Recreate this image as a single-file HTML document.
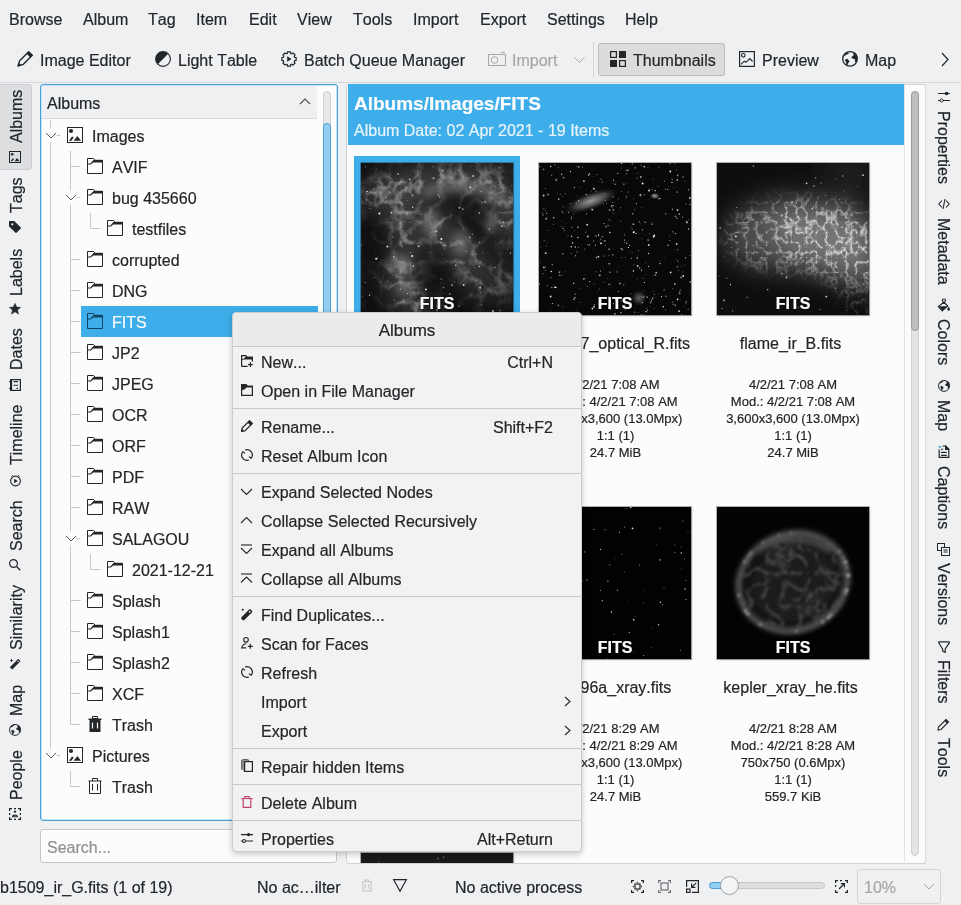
<!DOCTYPE html>
<html><head><meta charset="utf-8">
<style>
*{margin:0;padding:0;box-sizing:border-box}
html,body{width:961px;height:905px;overflow:hidden;background:#eff0f1;font-family:"Liberation Sans",sans-serif;color:#232629;font-size:16px;font-kerning:none;font-feature-settings:"kern" 0}
.a{position:absolute}
#root{position:absolute;left:0;top:0;width:961px;height:905px;will-change:transform}
.t{position:absolute;white-space:pre;line-height:18px;font-size:16px;-webkit-text-stroke:0.2px currentColor}
svg{position:absolute;overflow:visible}
</style></head><body><div id="root">
<div class="t" style="left:9px;top:11px;">Browse</div>
<div class="t" style="left:83px;top:11px;">Album</div>
<div class="t" style="left:148px;top:11px;">Tag</div>
<div class="t" style="left:196px;top:11px;">Item</div>
<div class="t" style="left:249px;top:11px;">Edit</div>
<div class="t" style="left:297px;top:11px;">View</div>
<div class="t" style="left:353px;top:11px;">Tools</div>
<div class="t" style="left:413px;top:11px;">Import</div>
<div class="t" style="left:480px;top:11px;">Export</div>
<div class="t" style="left:547px;top:11px;">Settings</div>
<div class="t" style="left:625px;top:11px;">Help</div>
<svg style="left:17px;top:51px;" width="16" height="16" viewBox="0 0 16 16"><path d="M1 15L2.66 9.66L11.66 0.66L15.34 4.34L6.34 13.34Z" fill="none" stroke="#232629" stroke-width="1.4" stroke-linejoin="round"/><path d="M11.66 0.66L15.34 4.34L13.3 6.4L9.6 2.7Z" fill="#232629"/><path d="M1 15L1.8 12.2C2.8 12.4 3.6 13.2 3.8 14.2Z" fill="#232629"/></svg>
<div class="t" style="left:40px;top:52px;">Image Editor</div>
<svg style="left:155px;top:51px;" width="16" height="16" viewBox="0 0 16 16"><circle cx="8" cy="8" r="7.4" fill="none" stroke="#232629" stroke-width="1.1"/><path d="M13.2 2.8A7.3 7.3 0 0 0 2.8 13.2Z" fill="#232629"/></svg>
<div class="t" style="left:178px;top:52px;">Light Table</div>
<svg style="left:281px;top:51px;" width="16" height="16" viewBox="0 0 16 16"><path d="M13.65 6.29 L15.14 6.50 L15.14 9.50 L13.65 9.71 L13.20 10.79 L14.11 11.99 L11.99 14.11 L10.79 13.20 L9.71 13.65 L9.50 15.14 L6.50 15.14 L6.29 13.65 L5.21 13.20 L4.01 14.11 L1.89 11.99 L2.80 10.79 L2.35 9.71 L0.86 9.50 L0.86 6.50 L2.35 6.29 L2.80 5.21 L1.89 4.01 L4.01 1.89 L5.21 2.80 L6.29 2.35 L6.50 0.86 L9.50 0.86 L9.71 2.35 L10.79 2.80 L11.99 1.89 L14.11 4.01 L13.20 5.21Z" fill="none" stroke="#232629" stroke-width="1.2" stroke-linejoin="round"/><path d="M6.2 5.3L10.6 8L6.2 10.7Z" fill="#232629"/></svg>
<div class="t" style="left:304px;top:52px;">Batch Queue Manager</div>
<svg style="left:488px;top:52px;" width="18" height="14" viewBox="0 0 18 14"><rect x="0.5" y="2.5" width="17" height="11" fill="none" stroke="#a5a7a9"/><circle cx="6.5" cy="8" r="3.3" fill="none" stroke="#a5a7a9"/><path d="M13 0.5H17" stroke="#a5a7a9"/></svg>
<div class="t" style="left:512px;top:52px;color:#a5a7a9">Import</div>
<svg style="left:574px;top:57px;" width="11" height="6" viewBox="0 0 11 6"><path d="M0.5 0.5L5.5 5.5L10.5 0.5" fill="none" stroke="#a5a7a9" stroke-width="1"/></svg>
<div class="a" style="left:593px;top:42px;width:1px;height:35px;background:#d2d4d6"></div>
<div class="a" style="left:598px;top:43px;width:127px;height:33px;background:#dcdcdd;border:1px solid #b9babb;border-radius:3px"></div>
<svg style="left:610px;top:51px;" width="16" height="16" viewBox="0 0 16 16"><rect x="0.6" y="0.6" width="5.8" height="5.8" fill="none" stroke="#232629" stroke-width="1.2"/><rect x="9" y="0" width="7" height="7" fill="#232629"/><rect x="0" y="9" width="7" height="7" fill="#232629"/><rect x="9.6" y="9.6" width="5.8" height="5.8" fill="none" stroke="#232629" stroke-width="1.2"/></svg>
<div class="t" style="left:633px;top:52px;">Thumbnails</div>
<svg style="left:739px;top:51px;" width="16" height="16" viewBox="0 0 16 16"><rect x="0.6" y="0.6" width="14.8" height="14.8" fill="none" stroke="#232629" stroke-width="1.2"/><circle cx="4.3" cy="4.3" r="1.8" fill="none" stroke="#232629" stroke-width="1.1"/><path d="M2 13.3L5.3 10.2L7 11.3L10.8 7.5L13.6 10.5" fill="none" stroke="#232629" stroke-width="1.1"/></svg>
<div class="t" style="left:762px;top:52px;">Preview</div>
<svg style="left:842px;top:51px;" width="16" height="16" viewBox="0 0 16 16"><circle cx="8" cy="7.9" r="7.3" fill="none" stroke="#232629" stroke-width="1.3"/><path d="M1.2 4.5L3.4 1.9L6.5 1.4L6.9 2.4L4.5 3.7L1.9 4.9Z" fill="#232629"/><path d="M11.2 1.2L11.6 4.3L9.5 5.9L9.8 7.2L12.9 8.3L13.1 11.8L14.9 10.3L15.6 7.2L14.9 3.4L13.4 1.9Z" fill="#232629"/><path d="M3.2 8.5L5.2 7.8L7.6 10.3L6.3 12L5.4 14.2L4.3 13.4L4.1 10.7L3 9.9Z" fill="#232629"/></svg>
<div class="t" style="left:865px;top:52px;">Map</div>
<svg style="left:941px;top:52px;" width="8" height="15" viewBox="0 0 8 15"><path d="M1 1L7 7.5L1 14" fill="none" stroke="#232629" stroke-width="1.2"/></svg>
<div class="a" style="left:0px;top:82px;width:961px;height:1px;background:#d4d6d8"></div>
<div class="a" style="left:0px;top:84px;width:32px;height:86px;background:#dcdee0;border:1px solid #cbcdd0;border-left:none;border-radius:0 4px 4px 0"></div>
<div class="a" style="left:40px;top:84px;width:298px;height:737px;background:#fcfcfc;border:1px solid #4c9fd4;border-radius:3px;box-shadow:inset 0 0 0 1px #bfe6fb"></div>
<div class="a" style="left:42px;top:86px;width:275px;height:33px;background:#eff0f1;border-bottom:1px solid #d8dadc"></div>
<div class="t" style="left:47px;top:95px;">Albums</div>
<svg style="left:299px;top:98px;" width="12" height="7" viewBox="0 0 12 7"><path d="M1 6L6 1L11 6" fill="none" stroke="#4d4f52" stroke-width="1.2"/></svg>
<div class="a" style="left:323px;top:91px;width:8px;height:724px;background:#e6e7e8;border:1px solid #cfd1d3;border-radius:4px"></div>
<div class="a" style="left:323px;top:123px;width:8px;height:400px;background:#93cef2;border:1px solid #4a9fd3;border-radius:4px"></div>
<div class="a" style="left:81px;top:306px;width:237px;height:31px;background:#3daee9"></div>
<svg style="left:67px;top:127px;" width="16" height="16" viewBox="0 0 16 16"><rect x="0.5" y="0.5" width="15" height="15" fill="none" stroke="#232629"/><circle cx="4" cy="4" r="2.1" fill="#232629"/><path d="M2 13.7L5 9.5L6.8 10.6L4 13.9Z" fill="#232629"/><path d="M6.6 13.7L10.4 8.9L14 13.7Z" fill="#232629"/></svg>
<div class="t" style="left:92px;top:128px;">Images</div>
<svg style="left:87px;top:158px;" width="16" height="16" viewBox="0 0 16 16"><path d="M0.5 0.5H6.6L8.3 2.3H15.5V15.5H0.5Z" fill="none" stroke="#232629"/><path d="M6.6 2H16V4.6H6.2L3.9 6.6H0.5V5.6H3.4L6 2.6Z" fill="#232629"/></svg>
<div class="t" style="left:112px;top:159px;">AVIF</div>
<svg style="left:87px;top:189px;" width="16" height="16" viewBox="0 0 16 16"><path d="M0.5 0.5H6.6L8.3 2.3H15.5V15.5H0.5Z" fill="none" stroke="#232629"/><path d="M6.6 2H16V4.6H6.2L3.9 6.6H0.5V5.6H3.4L6 2.6Z" fill="#232629"/></svg>
<div class="t" style="left:112px;top:190px;">bug 435660</div>
<svg style="left:107px;top:220px;" width="16" height="16" viewBox="0 0 16 16"><path d="M0.5 0.5H6.6L8.3 2.3H15.5V15.5H0.5Z" fill="none" stroke="#232629"/><path d="M6.6 2H16V4.6H6.2L3.9 6.6H0.5V5.6H3.4L6 2.6Z" fill="#232629"/></svg>
<div class="t" style="left:132px;top:221px;">testfiles</div>
<svg style="left:87px;top:251px;" width="16" height="16" viewBox="0 0 16 16"><path d="M0.5 0.5H6.6L8.3 2.3H15.5V15.5H0.5Z" fill="none" stroke="#232629"/><path d="M6.6 2H16V4.6H6.2L3.9 6.6H0.5V5.6H3.4L6 2.6Z" fill="#232629"/></svg>
<div class="t" style="left:112px;top:252px;">corrupted</div>
<svg style="left:87px;top:282px;" width="16" height="16" viewBox="0 0 16 16"><path d="M0.5 0.5H6.6L8.3 2.3H15.5V15.5H0.5Z" fill="none" stroke="#232629"/><path d="M6.6 2H16V4.6H6.2L3.9 6.6H0.5V5.6H3.4L6 2.6Z" fill="#232629"/></svg>
<div class="t" style="left:112px;top:283px;">DNG</div>
<svg style="left:87px;top:313px;" width="16" height="16" viewBox="0 0 16 16"><path d="M0.5 0.5H6.6L8.3 2.3H15.5V15.5H0.5Z" fill="none" stroke="#134466"/><path d="M6.6 2H16V4.6H6.2L3.9 6.6H0.5V5.6H3.4L6 2.6Z" fill="#134466"/></svg>
<div class="t" style="left:112px;top:314px;color:#fcfcfc">FITS</div>
<svg style="left:87px;top:344px;" width="16" height="16" viewBox="0 0 16 16"><path d="M0.5 0.5H6.6L8.3 2.3H15.5V15.5H0.5Z" fill="none" stroke="#232629"/><path d="M6.6 2H16V4.6H6.2L3.9 6.6H0.5V5.6H3.4L6 2.6Z" fill="#232629"/></svg>
<div class="t" style="left:112px;top:345px;">JP2</div>
<svg style="left:87px;top:375px;" width="16" height="16" viewBox="0 0 16 16"><path d="M0.5 0.5H6.6L8.3 2.3H15.5V15.5H0.5Z" fill="none" stroke="#232629"/><path d="M6.6 2H16V4.6H6.2L3.9 6.6H0.5V5.6H3.4L6 2.6Z" fill="#232629"/></svg>
<div class="t" style="left:112px;top:376px;">JPEG</div>
<svg style="left:87px;top:406px;" width="16" height="16" viewBox="0 0 16 16"><path d="M0.5 0.5H6.6L8.3 2.3H15.5V15.5H0.5Z" fill="none" stroke="#232629"/><path d="M6.6 2H16V4.6H6.2L3.9 6.6H0.5V5.6H3.4L6 2.6Z" fill="#232629"/></svg>
<div class="t" style="left:112px;top:407px;">OCR</div>
<svg style="left:87px;top:437px;" width="16" height="16" viewBox="0 0 16 16"><path d="M0.5 0.5H6.6L8.3 2.3H15.5V15.5H0.5Z" fill="none" stroke="#232629"/><path d="M6.6 2H16V4.6H6.2L3.9 6.6H0.5V5.6H3.4L6 2.6Z" fill="#232629"/></svg>
<div class="t" style="left:112px;top:438px;">ORF</div>
<svg style="left:87px;top:468px;" width="16" height="16" viewBox="0 0 16 16"><path d="M0.5 0.5H6.6L8.3 2.3H15.5V15.5H0.5Z" fill="none" stroke="#232629"/><path d="M6.6 2H16V4.6H6.2L3.9 6.6H0.5V5.6H3.4L6 2.6Z" fill="#232629"/></svg>
<div class="t" style="left:112px;top:469px;">PDF</div>
<svg style="left:87px;top:499px;" width="16" height="16" viewBox="0 0 16 16"><path d="M0.5 0.5H6.6L8.3 2.3H15.5V15.5H0.5Z" fill="none" stroke="#232629"/><path d="M6.6 2H16V4.6H6.2L3.9 6.6H0.5V5.6H3.4L6 2.6Z" fill="#232629"/></svg>
<div class="t" style="left:112px;top:500px;">RAW</div>
<svg style="left:87px;top:530px;" width="16" height="16" viewBox="0 0 16 16"><path d="M0.5 0.5H6.6L8.3 2.3H15.5V15.5H0.5Z" fill="none" stroke="#232629"/><path d="M6.6 2H16V4.6H6.2L3.9 6.6H0.5V5.6H3.4L6 2.6Z" fill="#232629"/></svg>
<div class="t" style="left:112px;top:531px;">SALAGOU</div>
<svg style="left:107px;top:561px;" width="16" height="16" viewBox="0 0 16 16"><path d="M0.5 0.5H6.6L8.3 2.3H15.5V15.5H0.5Z" fill="none" stroke="#232629"/><path d="M6.6 2H16V4.6H6.2L3.9 6.6H0.5V5.6H3.4L6 2.6Z" fill="#232629"/></svg>
<div class="t" style="left:132px;top:562px;">2021-12-21</div>
<svg style="left:87px;top:592px;" width="16" height="16" viewBox="0 0 16 16"><path d="M0.5 0.5H6.6L8.3 2.3H15.5V15.5H0.5Z" fill="none" stroke="#232629"/><path d="M6.6 2H16V4.6H6.2L3.9 6.6H0.5V5.6H3.4L6 2.6Z" fill="#232629"/></svg>
<div class="t" style="left:112px;top:593px;">Splash</div>
<svg style="left:87px;top:623px;" width="16" height="16" viewBox="0 0 16 16"><path d="M0.5 0.5H6.6L8.3 2.3H15.5V15.5H0.5Z" fill="none" stroke="#232629"/><path d="M6.6 2H16V4.6H6.2L3.9 6.6H0.5V5.6H3.4L6 2.6Z" fill="#232629"/></svg>
<div class="t" style="left:112px;top:624px;">Splash1</div>
<svg style="left:87px;top:654px;" width="16" height="16" viewBox="0 0 16 16"><path d="M0.5 0.5H6.6L8.3 2.3H15.5V15.5H0.5Z" fill="none" stroke="#232629"/><path d="M6.6 2H16V4.6H6.2L3.9 6.6H0.5V5.6H3.4L6 2.6Z" fill="#232629"/></svg>
<div class="t" style="left:112px;top:655px;">Splash2</div>
<svg style="left:87px;top:685px;" width="16" height="16" viewBox="0 0 16 16"><path d="M0.5 0.5H6.6L8.3 2.3H15.5V15.5H0.5Z" fill="none" stroke="#232629"/><path d="M6.6 2H16V4.6H6.2L3.9 6.6H0.5V5.6H3.4L6 2.6Z" fill="#232629"/></svg>
<div class="t" style="left:112px;top:686px;">XCF</div>
<svg style="left:87px;top:716px;" width="16" height="16" viewBox="0 0 16 16"><path d="M1.5 2.5H14.5V4H1.5Z" fill="#232629"/><path d="M5.5 0.5H10.5V2.5H5.5Z" fill="none" stroke="#232629"/><path d="M2.5 4H13.5V16H2.5Z" fill="#232629"/><path d="M5.5 6.5V12.5M10.5 6.5V12.5" stroke="#fcfcfc" stroke-width="1.2"/></svg>
<div class="t" style="left:112px;top:717px;">Trash</div>
<svg style="left:67px;top:747px;" width="16" height="16" viewBox="0 0 16 16"><rect x="0.5" y="0.5" width="15" height="15" fill="none" stroke="#232629"/><circle cx="4" cy="4" r="2.1" fill="#232629"/><path d="M2 13.7L5 9.5L6.8 10.6L4 13.9Z" fill="#232629"/><path d="M6.6 13.7L10.4 8.9L14 13.7Z" fill="#232629"/></svg>
<div class="t" style="left:92px;top:748px;">Pictures</div>
<svg style="left:87px;top:778px;" width="16" height="16" viewBox="0 0 16 16"><path d="M1.5 3H14.5" stroke="#232629"/><path d="M5.5 3V0.5H10.5V3" fill="none" stroke="#232629"/><path d="M2.5 3V15.5H13.5V3" fill="none" stroke="#232629"/><path d="M5.5 6V12.5M10.5 6V12.5" stroke="#232629"/></svg>
<div class="t" style="left:112px;top:779px;">Trash</div>
<svg style="left:0;top:0" width="961" height="905"><path d="M50.5 120V128.5M50.5 142.5V151M56.5 135.5H60.5M50.5 151V182M70.5 151V166.5H80.5M70.5 166.5V182M50.5 182V213M70.5 182V190.5M70.5 204.5V213M76.5 197.5H80.5M50.5 213V244M70.5 213V244M90.5 213V228.5H100.5M50.5 244V275M70.5 244V259.5H80.5M70.5 259.5V275M50.5 275V306M70.5 275V290.5H80.5M70.5 290.5V306M50.5 306V337M70.5 306V321.5H80.5M70.5 321.5V337M50.5 337V368M70.5 337V352.5H80.5M70.5 352.5V368M50.5 368V399M70.5 368V383.5H80.5M70.5 383.5V399M50.5 399V430M70.5 399V414.5H80.5M70.5 414.5V430M50.5 430V461M70.5 430V445.5H80.5M70.5 445.5V461M50.5 461V492M70.5 461V476.5H80.5M70.5 476.5V492M50.5 492V523M70.5 492V507.5H80.5M70.5 507.5V523M50.5 523V554M70.5 523V531.5M70.5 545.5V554M76.5 538.5H80.5M50.5 554V585M70.5 554V585M90.5 554V569.5H100.5M50.5 585V616M70.5 585V600.5H80.5M70.5 600.5V616M50.5 616V647M70.5 616V631.5H80.5M70.5 631.5V647M50.5 647V678M70.5 647V662.5H80.5M70.5 662.5V678M50.5 678V709M70.5 678V693.5H80.5M70.5 693.5V709M50.5 709V740M70.5 709V724.5H80.5M50.5 740V748.5M56.5 755.5H60.5M70.5 771V786.5H80.5" stroke="#c6c8ca" stroke-width="1" fill="none"/><path d="M46.0 133.0L51.0 138.0L56.0 133.0" fill="none" stroke="#5a5c5f" stroke-width="1"/><path d="M66.0 195.0L71.0 200.0L76.0 195.0" fill="none" stroke="#5a5c5f" stroke-width="1"/><path d="M66.0 536.0L71.0 541.0L76.0 536.0" fill="none" stroke="#5a5c5f" stroke-width="1"/><path d="M46.0 753.0L51.0 758.0L56.0 753.0" fill="none" stroke="#5a5c5f" stroke-width="1"/></svg>
<div class="a" style="left:40px;top:829px;width:297px;height:34px;background:#fcfcfc;border:1px solid #c4c6c8;border-radius:3px"></div>
<div class="t" style="left:47px;top:839px;color:#8f9193">Search...</div>
<div class="a" style="left:346px;top:84px;width:580px;height:780px;background:#fcfcfc;border:1px solid #d0d2d4;border-radius:3px"></div>
<div class="a" style="left:348px;top:84px;width:556px;height:61px;background:#3daee9"></div>
<div class="t" style="left:354px;top:94px;font-size:19px;font-weight:bold;color:#fcfcfc;line-height:20px">Albums/Images/FITS</div>
<div class="t" style="left:354px;top:122px;color:#e8f4fb">Album Date: 02 Apr 2021 - 19 Items</div>
<div class="a" style="left:904px;top:85px;width:1px;height:777px;background:#e4e5e6"></div>
<div class="a" style="left:911px;top:91px;width:8px;height:765px;background:#e3e4e5;border:1px solid #cfd1d3;border-radius:4px"></div>
<div class="a" style="left:911px;top:91px;width:8px;height:240px;background:#bdbfc1;border:1px solid #999b9e;border-radius:4px"></div>
<div class="a" style="left:354px;top:156px;width:166px;height:170px;background:#3daee9"></div>
<div class="a" style="left:361px;top:163px;width:152px;height:152px;overflow:hidden;box-shadow:0 0 0 1px rgba(0,0,0,0.3),1px 1px 2px rgba(0,0,0,0.2)"><svg style="left:0;top:0" width="152" height="152"><defs><filter id="f1" x="-20" y="-20" width="192" height="192" filterUnits="userSpaceOnUse"><feTurbulence type="turbulence" baseFrequency="0.05" numOctaves="4" seed="4"/><feColorMatrix type="matrix" values="0 0 0 0 1  0 0 0 0 1  0 0 0 0 1  -2.2 0 0 0 0.8"/><feGaussianBlur stdDeviation="0.6"/></filter><filter id="bf1" x="-20" y="-20" width="192" height="192" filterUnits="userSpaceOnUse"><feGaussianBlur stdDeviation="9"/></filter><mask id="kf1"><rect width="152" height="152" fill="#141414"/><g filter="url(#bf1)" fill="none" stroke-linecap="round"><path d="M10 35C40 15 90 10 130 20C145 25 150 45 148 70" stroke="#d0d0d0" stroke-width="18"/><path d="M45 35C30 60 60 80 40 105C30 120 45 140 60 148" stroke="#e0e0e0" stroke-width="16"/><path d="M70 55C85 70 95 90 115 100" stroke="#c8c8c8" stroke-width="20"/><path d="M110 120C125 130 140 125 150 110" stroke="#909090" stroke-width="16"/></g></mask><filter id="hf1" x="-20" y="-20" width="192" height="192" filterUnits="userSpaceOnUse"><feGaussianBlur stdDeviation="12"/></filter></defs><rect width="152" height="152" fill="#101010"/><g filter="url(#hf1)" fill="none" stroke-linecap="round"><path d="M10 35C40 15 90 10 130 20C145 25 150 45 148 70" stroke="#484848" stroke-width="22"/><path d="M45 35C30 60 60 80 40 105C30 120 45 140 60 148" stroke="#4a4a4a" stroke-width="20"/><path d="M70 55C85 70 95 90 115 100" stroke="#444" stroke-width="24"/><path d="M110 120C125 130 140 125 150 110" stroke="#303030" stroke-width="20"/></g><rect width="152" height="152" filter="url(#f1)" mask="url(#kf1)"/><filter id="sf1" x="-20" y="-20" width="192" height="192" filterUnits="userSpaceOnUse"><feGaussianBlur stdDeviation="4"/></filter><g filter="url(#sf1)" fill="#8a8a8a" opacity="0.55"><path d="M60 28C85 12 125 15 148 35L140 42C120 26 90 24 65 36Z"/><ellipse cx="38" cy="100" rx="12" ry="8"/><ellipse cx="45" cy="125" rx="10" ry="7"/><ellipse cx="100" cy="80" rx="9" ry="12"/><ellipse cx="70" cy="60" rx="8" ry="14"/><ellipse cx="130" cy="60" rx="6" ry="10"/></g><circle cx="20.4" cy="128.8" r="0.4" fill="#fff" fill-opacity="0.52"/><circle cx="75.3" cy="68.3" r="1.0" fill="#fff" fill-opacity="0.60"/><circle cx="31.9" cy="74.2" r="0.6" fill="#fff" fill-opacity="0.63"/><circle cx="115.9" cy="0.3" r="0.6" fill="#fff" fill-opacity="0.52"/><circle cx="121.9" cy="89.9" r="0.4" fill="#fff" fill-opacity="0.94"/><circle cx="4.6" cy="3.9" r="0.7" fill="#fff" fill-opacity="0.36"/><circle cx="133.9" cy="104.3" r="0.6" fill="#fff" fill-opacity="0.82"/><circle cx="80.2" cy="116.1" r="0.6" fill="#fff" fill-opacity="0.71"/><circle cx="52.5" cy="102.9" r="0.6" fill="#fff" fill-opacity="0.97"/><circle cx="140.8" cy="63.3" r="0.7" fill="#fff" fill-opacity="0.95"/><circle cx="15.2" cy="95.7" r="1.0" fill="#fff" fill-opacity="0.91"/><circle cx="18.4" cy="50.6" r="1.0" fill="#fff" fill-opacity="0.98"/><circle cx="76.1" cy="147.0" r="0.7" fill="#fff" fill-opacity="0.89"/><circle cx="101.9" cy="46.1" r="0.7" fill="#fff" fill-opacity="0.98"/><circle cx="75.9" cy="143.0" r="0.6" fill="#fff" fill-opacity="0.73"/><circle cx="5.2" cy="36.9" r="0.6" fill="#fff" fill-opacity="0.62"/><circle cx="26.3" cy="83.4" r="1.0" fill="#fff" fill-opacity="0.85"/><circle cx="112.2" cy="13.1" r="1.0" fill="#fff" fill-opacity="0.68"/><circle cx="118.3" cy="79.2" r="0.6" fill="#fff" fill-opacity="0.59"/><circle cx="111.4" cy="71.3" r="0.5" fill="#fff" fill-opacity="0.81"/><circle cx="149.4" cy="90.2" r="0.6" fill="#fff" fill-opacity="0.77"/><circle cx="25.6" cy="34.5" r="0.4" fill="#fff" fill-opacity="0.85"/><circle cx="82.0" cy="130.8" r="0.45" fill="#fff" fill-opacity="0.61"/><circle cx="52.3" cy="128.8" r="0.5" fill="#fff" fill-opacity="0.65"/><circle cx="40.9" cy="83.3" r="1.0" fill="#fff" fill-opacity="0.35"/><circle cx="119.1" cy="124.7" r="1.0" fill="#fff" fill-opacity="0.68"/><circle cx="19.6" cy="118.2" r="0.45" fill="#fff" fill-opacity="0.63"/><circle cx="8.5" cy="132.2" r="0.7" fill="#fff" fill-opacity="0.71"/><circle cx="143.0" cy="62.8" r="0.5" fill="#fff" fill-opacity="0.62"/><circle cx="0.2" cy="82.1" r="0.7" fill="#fff" fill-opacity="0.57"/><circle cx="91.2" cy="122.3" r="1.0" fill="#fff" fill-opacity="0.47"/><circle cx="88.8" cy="130.9" r="0.7" fill="#fff" fill-opacity="0.87"/><circle cx="124.1" cy="38.8" r="1.0" fill="#fff" fill-opacity="0.40"/><circle cx="131.9" cy="68.9" r="0.5" fill="#fff" fill-opacity="0.51"/><circle cx="16.6" cy="95.0" r="0.5" fill="#fff" fill-opacity="0.54"/><circle cx="25.5" cy="38.8" r="0.45" fill="#fff" fill-opacity="0.78"/><circle cx="98.5" cy="44.8" r="1.0" fill="#fff" fill-opacity="0.56"/><circle cx="72.0" cy="3.6" r="0.6" fill="#fff" fill-opacity="0.57"/><circle cx="121.0" cy="39.3" r="0.5" fill="#fff" fill-opacity="0.93"/><circle cx="77.5" cy="31.8" r="0.7" fill="#fff" fill-opacity="0.63"/><circle cx="148.3" cy="34.3" r="0.6" fill="#fff" fill-opacity="0.45"/><circle cx="109.3" cy="24.4" r="1.0" fill="#fff" fill-opacity="0.68"/><circle cx="64.9" cy="126.5" r="1.0" fill="#fff" fill-opacity="0.87"/><circle cx="78.5" cy="33.9" r="1.0" fill="#fff" fill-opacity="0.37"/><circle cx="102.6" cy="122.1" r="1.0" fill="#fff" fill-opacity="0.76"/><circle cx="8.9" cy="45.4" r="0.45" fill="#fff" fill-opacity="0.92"/><circle cx="46.6" cy="130.5" r="0.5" fill="#fff" fill-opacity="0.95"/><circle cx="45.3" cy="24.0" r="0.7" fill="#fff" fill-opacity="0.51"/><circle cx="1.3" cy="133.6" r="0.4" fill="#fff" fill-opacity="0.73"/><circle cx="33.1" cy="136.9" r="0.6" fill="#fff" fill-opacity="0.46"/><circle cx="131.9" cy="148.0" r="1.0" fill="#fff" fill-opacity="0.75"/><circle cx="5.7" cy="30.5" r="0.4" fill="#fff" fill-opacity="0.48"/><circle cx="102.5" cy="65.8" r="0.45" fill="#fff" fill-opacity="0.67"/><circle cx="142.6" cy="59.3" r="0.7" fill="#fff" fill-opacity="0.67"/><circle cx="49.5" cy="132.5" r="0.5" fill="#fff" fill-opacity="0.36"/><circle cx="30.5" cy="49.8" r="0.7" fill="#fff" fill-opacity="0.86"/><circle cx="51.5" cy="32.4" r="1.0" fill="#fff" fill-opacity="0.41"/><circle cx="57.6" cy="83.2" r="1.0" fill="#fff" fill-opacity="0.70"/><circle cx="116.7" cy="80.9" r="0.4" fill="#fff" fill-opacity="0.82"/><circle cx="12.9" cy="25.8" r="0.7" fill="#fff" fill-opacity="0.49"/><circle cx="115.4" cy="91.2" r="0.5" fill="#fff" fill-opacity="0.59"/><circle cx="51.7" cy="44.3" r="0.7" fill="#fff" fill-opacity="0.86"/><circle cx="108.7" cy="74.3" r="0.7" fill="#fff" fill-opacity="0.71"/><circle cx="15.8" cy="5.9" r="0.4" fill="#fff" fill-opacity="0.60"/><circle cx="150.7" cy="22.4" r="0.45" fill="#fff" fill-opacity="0.57"/><circle cx="93.5" cy="118.8" r="0.6" fill="#fff" fill-opacity="0.40"/><circle cx="83.6" cy="86.0" r="0.5" fill="#fff" fill-opacity="0.59"/><circle cx="44.9" cy="81.2" r="0.4" fill="#fff" fill-opacity="0.65"/><circle cx="42.1" cy="119.6" r="0.5" fill="#fff" fill-opacity="0.36"/><circle cx="101.9" cy="13.9" r="0.4" fill="#fff" fill-opacity="0.89"/><circle cx="120.1" cy="28.6" r="0.7" fill="#fff" fill-opacity="0.62"/><circle cx="17.6" cy="25.4" r="0.45" fill="#fff" fill-opacity="0.45"/><circle cx="128.4" cy="66.1" r="0.6" fill="#fff" fill-opacity="0.87"/><circle cx="82.5" cy="124.4" r="0.7" fill="#fff" fill-opacity="0.51"/><circle cx="72.5" cy="15.2" r="1.0" fill="#fff" fill-opacity="0.56"/><circle cx="4.1" cy="119.6" r="0.5" fill="#fff" fill-opacity="0.82"/><circle cx="48.7" cy="59.5" r="0.6" fill="#fff" fill-opacity="0.39"/><circle cx="138.8" cy="147.4" r="0.6" fill="#fff" fill-opacity="0.42"/><circle cx="32.7" cy="93.9" r="0.7" fill="#fff" fill-opacity="0.91"/><circle cx="71.3" cy="54.1" r="0.45" fill="#fff" fill-opacity="0.70"/><circle cx="46.7" cy="37.4" r="0.4" fill="#fff" fill-opacity="0.88"/><circle cx="13.6" cy="114.5" r="0.4" fill="#fff" fill-opacity="0.77"/><circle cx="97.8" cy="143.0" r="0.6" fill="#fff" fill-opacity="0.98"/><circle cx="6.2" cy="28.4" r="0.7" fill="#fff" fill-opacity="0.93"/><circle cx="46.0" cy="50.8" r="0.7" fill="#fff" fill-opacity="0.75"/><circle cx="122.8" cy="14.0" r="0.45" fill="#fff" fill-opacity="0.36"/><circle cx="37.1" cy="11.0" r="0.7" fill="#fff" fill-opacity="0.91"/><circle cx="110.8" cy="3.3" r="0.4" fill="#fff" fill-opacity="0.54"/><circle cx="120.4" cy="75.0" r="0.45" fill="#fff" fill-opacity="0.42"/><circle cx="118.2" cy="49.9" r="0.7" fill="#fff" fill-opacity="0.97"/><circle cx="26.3" cy="118.0" r="0.45" fill="#fff" fill-opacity="0.88"/><circle cx="48.6" cy="16.2" r="0.7" fill="#fff" fill-opacity="0.89"/><circle cx="91.5" cy="19.2" r="0.45" fill="#fff" fill-opacity="0.44"/><circle cx="138.4" cy="4.8" r="0.5" fill="#fff" fill-opacity="0.88"/><circle cx="94.8" cy="102.2" r="0.7" fill="#fff" fill-opacity="0.90"/><circle cx="113.4" cy="104.8" r="0.45" fill="#fff" fill-opacity="0.54"/><circle cx="81.7" cy="7.4" r="1.0" fill="#fff" fill-opacity="0.51"/><circle cx="118.2" cy="103.7" r="0.6" fill="#fff" fill-opacity="0.88"/><circle cx="83.5" cy="82.3" r="0.7" fill="#fff" fill-opacity="0.64"/><circle cx="60.1" cy="51.5" r="0.5" fill="#fff" fill-opacity="0.67"/><circle cx="120.5" cy="141.8" r="0.7" fill="#fff" fill-opacity="0.36"/><circle cx="105.1" cy="88.2" r="0.7" fill="#fff" fill-opacity="0.43"/><circle cx="39.4" cy="126.0" r="0.6" fill="#fff" fill-opacity="0.72"/><circle cx="26.2" cy="13.6" r="0.6" fill="#fff" fill-opacity="0.35"/><circle cx="80.4" cy="76.1" r="1.0" fill="#fff" fill-opacity="0.95"/><circle cx="141.4" cy="97.1" r="0.45" fill="#fff" fill-opacity="0.50"/><circle cx="75.3" cy="72.8" r="0.45" fill="#fff" fill-opacity="0.81"/><circle cx="51.2" cy="92.9" r="1.0" fill="#fff" fill-opacity="0.95"/><circle cx="41.8" cy="98.3" r="0.4" fill="#fff" fill-opacity="0.95"/><circle cx="116.0" cy="98.1" r="0.5" fill="#fff" fill-opacity="0.45"/></svg><div class="t" style="left:0;top:132px;width:152px;text-align:center;font-weight:bold;color:#fff;text-shadow:0 0 2px #000">FITS</div></div>
<div class="t" style="left:344.5px;top:334.5px;width:180px;text-align:center">b1509_ir_G.fits</div>
<div class="t" style="left:347px;top:376px;width:180px;text-align:center;font-size:13px;line-height:17px">4/2/21 7:08 AM<br>Mod.: 4/2/21 7:08 AM<br>3,600x3,600 (13.0Mpx)<br>1:1 (1)<br>24.7 MiB</div>
<div class="a" style="left:539px;top:163px;width:152px;height:152px;overflow:hidden;box-shadow:0 0 0 1px rgba(0,0,0,0.3),1px 1px 2px rgba(0,0,0,0.2)"><svg style="left:0;top:0" width="152" height="152"><defs><radialGradient id="gf2"><stop offset="0" stop-color="#999"/><stop offset="0.5" stop-color="#444"/><stop offset="1" stop-color="#000" stop-opacity="0"/></radialGradient></defs><rect width="152" height="152" fill="#080808"/><ellipse cx="52" cy="38" rx="32" ry="10" fill="url(#gf2)" transform="rotate(-20 52 38)"/><ellipse cx="116" cy="33" rx="6" ry="4" fill="url(#gf2)"/><circle cx="100" cy="135" r="9" fill="url(#gf2)" opacity="0.6"/><circle cx="145.3" cy="144.1" r="0.4" fill="#fff" fill-opacity="0.41"/><circle cx="54.9" cy="25.7" r="0.9" fill="#fff" fill-opacity="0.90"/><circle cx="38.2" cy="32.3" r="0.4" fill="#fff" fill-opacity="0.73"/><circle cx="24.1" cy="65.5" r="0.6" fill="#fff" fill-opacity="0.87"/><circle cx="130.8" cy="77.4" r="0.5" fill="#fff" fill-opacity="0.70"/><circle cx="67.6" cy="40.8" r="0.4" fill="#fff" fill-opacity="0.92"/><circle cx="55.3" cy="141.6" r="0.6" fill="#fff" fill-opacity="0.63"/><circle cx="134.4" cy="25.0" r="0.45" fill="#fff" fill-opacity="0.50"/><circle cx="3.6" cy="49.4" r="0.45" fill="#fff" fill-opacity="0.68"/><circle cx="54.7" cy="78.1" r="0.7" fill="#fff" fill-opacity="0.47"/><circle cx="135.8" cy="121.1" r="0.9" fill="#fff" fill-opacity="0.69"/><circle cx="138.1" cy="55.4" r="0.7" fill="#fff" fill-opacity="0.58"/><circle cx="149.1" cy="146.2" r="0.45" fill="#fff" fill-opacity="0.97"/><circle cx="60.8" cy="112.3" r="0.9" fill="#fff" fill-opacity="0.69"/><circle cx="74.5" cy="140.6" r="0.7" fill="#fff" fill-opacity="0.69"/><circle cx="121.0" cy="100.6" r="0.6" fill="#fff" fill-opacity="0.93"/><circle cx="70.1" cy="86.3" r="0.7" fill="#fff" fill-opacity="0.82"/><circle cx="74.0" cy="33.7" r="0.5" fill="#fff" fill-opacity="0.88"/><circle cx="126.9" cy="133.3" r="0.7" fill="#fff" fill-opacity="0.52"/><circle cx="138.5" cy="47.1" r="0.9" fill="#fff" fill-opacity="0.89"/><circle cx="85.5" cy="77.1" r="0.7" fill="#fff" fill-opacity="0.73"/><circle cx="47.4" cy="31.6" r="0.7" fill="#fff" fill-opacity="0.59"/><circle cx="104.0" cy="134.1" r="0.5" fill="#fff" fill-opacity="0.82"/><circle cx="138.0" cy="29.1" r="0.9" fill="#fff" fill-opacity="0.42"/><circle cx="87.3" cy="7.4" r="0.7" fill="#fff" fill-opacity="0.50"/><circle cx="133.1" cy="16.2" r="0.7" fill="#fff" fill-opacity="0.44"/><circle cx="40.4" cy="125.4" r="0.4" fill="#fff" fill-opacity="0.62"/><circle cx="109.0" cy="4.8" r="0.5" fill="#fff" fill-opacity="0.58"/><circle cx="37.9" cy="3.6" r="0.4" fill="#fff" fill-opacity="0.97"/><circle cx="3.9" cy="110.9" r="0.4" fill="#fff" fill-opacity="0.59"/><circle cx="19.4" cy="142.3" r="0.9" fill="#fff" fill-opacity="0.47"/><circle cx="105.1" cy="58.6" r="0.4" fill="#fff" fill-opacity="0.87"/><circle cx="37.7" cy="147.6" r="0.4" fill="#fff" fill-opacity="0.57"/><circle cx="93.5" cy="112.9" r="0.4" fill="#fff" fill-opacity="0.54"/><circle cx="74.3" cy="46.9" r="0.7" fill="#fff" fill-opacity="0.85"/><circle cx="112.5" cy="137.1" r="0.6" fill="#fff" fill-opacity="0.91"/><circle cx="107.2" cy="71.9" r="0.45" fill="#fff" fill-opacity="0.41"/><circle cx="104.5" cy="127.4" r="0.4" fill="#fff" fill-opacity="0.64"/><circle cx="133.0" cy="19.4" r="0.7" fill="#fff" fill-opacity="0.86"/><circle cx="74.0" cy="49.9" r="0.5" fill="#fff" fill-opacity="0.52"/><circle cx="92.1" cy="63.8" r="0.4" fill="#fff" fill-opacity="0.80"/><circle cx="145.8" cy="101.9" r="0.5" fill="#fff" fill-opacity="0.37"/><circle cx="24.5" cy="14.6" r="0.9" fill="#fff" fill-opacity="0.50"/><circle cx="139.3" cy="107.6" r="0.4" fill="#fff" fill-opacity="1.00"/><circle cx="35.3" cy="67.6" r="0.5" fill="#fff" fill-opacity="0.40"/><circle cx="34.7" cy="120.3" r="0.7" fill="#fff" fill-opacity="0.81"/><circle cx="39.0" cy="64.3" r="0.7" fill="#fff" fill-opacity="0.84"/><circle cx="23.0" cy="58.5" r="0.45" fill="#fff" fill-opacity="0.42"/><circle cx="110.0" cy="36.6" r="0.4" fill="#fff" fill-opacity="0.36"/><circle cx="114.1" cy="16.0" r="0.4" fill="#fff" fill-opacity="0.69"/><circle cx="70.6" cy="47.1" r="0.9" fill="#fff" fill-opacity="0.60"/><circle cx="104.1" cy="115.6" r="0.45" fill="#fff" fill-opacity="0.82"/><circle cx="65.9" cy="77.7" r="0.7" fill="#fff" fill-opacity="0.73"/><circle cx="134.0" cy="141.2" r="0.7" fill="#fff" fill-opacity="0.47"/><circle cx="14.3" cy="122.0" r="0.5" fill="#fff" fill-opacity="0.36"/><circle cx="146.0" cy="18.0" r="0.5" fill="#fff" fill-opacity="0.54"/><circle cx="149.5" cy="56.6" r="0.4" fill="#fff" fill-opacity="0.92"/><circle cx="62.7" cy="16.0" r="0.45" fill="#fff" fill-opacity="0.90"/><circle cx="102.2" cy="2.4" r="0.6" fill="#fff" fill-opacity="0.39"/><circle cx="96.9" cy="70.4" r="0.7" fill="#fff" fill-opacity="0.75"/><circle cx="0.8" cy="3.7" r="0.5" fill="#fff" fill-opacity="0.96"/><circle cx="11.6" cy="114.8" r="0.45" fill="#fff" fill-opacity="0.43"/><circle cx="56.8" cy="108.8" r="0.45" fill="#fff" fill-opacity="0.84"/><circle cx="60.0" cy="18.5" r="0.4" fill="#fff" fill-opacity="0.43"/><circle cx="93.7" cy="50.8" r="0.6" fill="#fff" fill-opacity="0.97"/><circle cx="105.3" cy="3.7" r="0.9" fill="#fff" fill-opacity="0.66"/><circle cx="6.6" cy="107.3" r="0.5" fill="#fff" fill-opacity="0.58"/><circle cx="69.5" cy="121.4" r="0.5" fill="#fff" fill-opacity="0.66"/><circle cx="131.6" cy="109.4" r="0.9" fill="#fff" fill-opacity="0.87"/><circle cx="141.7" cy="127.1" r="0.5" fill="#fff" fill-opacity="0.61"/><circle cx="23.8" cy="90.7" r="0.7" fill="#fff" fill-opacity="0.63"/><circle cx="103.2" cy="139.6" r="0.7" fill="#fff" fill-opacity="0.82"/><circle cx="87.5" cy="10.8" r="0.45" fill="#fff" fill-opacity="1.00"/><circle cx="22.3" cy="63.3" r="0.4" fill="#fff" fill-opacity="0.87"/><circle cx="138.5" cy="103.6" r="0.9" fill="#fff" fill-opacity="0.37"/><circle cx="148.0" cy="59.4" r="0.9" fill="#fff" fill-opacity="0.79"/><circle cx="103.5" cy="66.7" r="0.7" fill="#fff" fill-opacity="0.54"/><circle cx="23.7" cy="150.0" r="0.6" fill="#fff" fill-opacity="0.41"/><circle cx="78.5" cy="108.7" r="0.5" fill="#fff" fill-opacity="0.46"/><circle cx="23.9" cy="144.0" r="0.45" fill="#fff" fill-opacity="0.61"/><circle cx="151.3" cy="119.0" r="0.7" fill="#fff" fill-opacity="0.82"/><circle cx="70.9" cy="109.3" r="0.7" fill="#fff" fill-opacity="0.60"/><circle cx="112.0" cy="59.7" r="0.4" fill="#fff" fill-opacity="0.66"/><circle cx="61.5" cy="108.0" r="0.6" fill="#fff" fill-opacity="0.81"/><circle cx="71.8" cy="146.2" r="0.5" fill="#fff" fill-opacity="0.81"/><circle cx="138.6" cy="12.4" r="0.9" fill="#fff" fill-opacity="0.50"/><circle cx="94.4" cy="61.2" r="0.9" fill="#fff" fill-opacity="0.60"/><circle cx="133.9" cy="139.1" r="0.5" fill="#fff" fill-opacity="0.65"/><circle cx="108.2" cy="134.2" r="0.9" fill="#fff" fill-opacity="0.47"/><circle cx="14.4" cy="61.2" r="0.45" fill="#fff" fill-opacity="0.82"/><circle cx="92.2" cy="137.6" r="0.4" fill="#fff" fill-opacity="0.60"/><circle cx="84.8" cy="121.8" r="0.5" fill="#fff" fill-opacity="0.83"/><circle cx="89.1" cy="29.1" r="0.7" fill="#fff" fill-opacity="0.44"/><circle cx="93.1" cy="66.0" r="0.5" fill="#fff" fill-opacity="0.68"/><circle cx="26.4" cy="108.3" r="0.4" fill="#fff" fill-opacity="0.58"/><circle cx="137.7" cy="81.0" r="0.9" fill="#fff" fill-opacity="0.78"/><circle cx="114.7" cy="73.7" r="0.9" fill="#fff" fill-opacity="0.95"/><circle cx="69.8" cy="133.4" r="0.6" fill="#fff" fill-opacity="0.37"/><circle cx="12.1" cy="114.6" r="0.45" fill="#fff" fill-opacity="0.84"/><circle cx="142.7" cy="151.7" r="0.5" fill="#fff" fill-opacity="0.79"/><circle cx="119.7" cy="131.3" r="0.45" fill="#fff" fill-opacity="0.39"/><circle cx="75.9" cy="150.8" r="0.9" fill="#fff" fill-opacity="0.54"/><circle cx="1.6" cy="84.7" r="0.4" fill="#fff" fill-opacity="0.59"/><circle cx="81.8" cy="58.1" r="0.6" fill="#fff" fill-opacity="0.48"/><circle cx="102.8" cy="75.7" r="0.45" fill="#fff" fill-opacity="0.66"/><circle cx="81.9" cy="139.0" r="0.4" fill="#fff" fill-opacity="0.52"/><circle cx="47.6" cy="50.7" r="0.5" fill="#fff" fill-opacity="0.77"/><circle cx="59.7" cy="127.8" r="0.4" fill="#fff" fill-opacity="0.68"/><circle cx="32.0" cy="90.6" r="0.45" fill="#fff" fill-opacity="0.87"/><circle cx="95.6" cy="46.8" r="0.45" fill="#fff" fill-opacity="0.97"/><circle cx="85.3" cy="79.4" r="0.4" fill="#fff" fill-opacity="0.97"/><circle cx="17.0" cy="124.4" r="0.6" fill="#fff" fill-opacity="0.91"/><circle cx="32.5" cy="54.1" r="0.5" fill="#fff" fill-opacity="0.65"/><circle cx="25.3" cy="67.2" r="0.5" fill="#fff" fill-opacity="0.65"/><circle cx="20.3" cy="109.2" r="0.9" fill="#fff" fill-opacity="0.49"/><circle cx="41.5" cy="24.2" r="0.45" fill="#fff" fill-opacity="0.65"/><circle cx="114.4" cy="128.6" r="0.45" fill="#fff" fill-opacity="0.58"/><circle cx="120.9" cy="35.4" r="0.7" fill="#fff" fill-opacity="0.76"/><circle cx="60.8" cy="125.2" r="0.5" fill="#fff" fill-opacity="0.53"/><circle cx="109.5" cy="90.5" r="0.7" fill="#fff" fill-opacity="0.80"/><circle cx="144.2" cy="112.9" r="0.9" fill="#fff" fill-opacity="0.92"/><circle cx="142.2" cy="114.5" r="0.9" fill="#fff" fill-opacity="0.54"/><circle cx="94.6" cy="101.9" r="0.5" fill="#fff" fill-opacity="0.55"/><circle cx="73.6" cy="39.2" r="0.5" fill="#fff" fill-opacity="0.64"/><circle cx="13.3" cy="140.4" r="0.5" fill="#fff" fill-opacity="0.97"/><circle cx="19.3" cy="4.3" r="0.5" fill="#fff" fill-opacity="0.46"/><circle cx="11.7" cy="133.5" r="0.9" fill="#fff" fill-opacity="0.85"/><circle cx="66.3" cy="82.5" r="0.45" fill="#fff" fill-opacity="0.89"/><circle cx="90.4" cy="82.3" r="0.6" fill="#fff" fill-opacity="0.76"/><circle cx="22.9" cy="48.1" r="0.6" fill="#fff" fill-opacity="0.41"/><circle cx="21.6" cy="31.1" r="0.5" fill="#fff" fill-opacity="0.44"/><circle cx="54.8" cy="13.5" r="0.45" fill="#fff" fill-opacity="0.51"/><circle cx="36.5" cy="92.8" r="0.5" fill="#fff" fill-opacity="0.96"/><circle cx="98.5" cy="92.9" r="0.45" fill="#fff" fill-opacity="0.47"/><circle cx="9.6" cy="67.4" r="0.5" fill="#fff" fill-opacity="0.44"/><circle cx="79.5" cy="128.5" r="0.5" fill="#fff" fill-opacity="0.77"/><circle cx="108.0" cy="145.5" r="0.45" fill="#fff" fill-opacity="1.00"/><circle cx="59.6" cy="72.0" r="0.7" fill="#fff" fill-opacity="0.92"/><circle cx="82.8" cy="94.5" r="0.4" fill="#fff" fill-opacity="0.73"/><circle cx="81.9" cy="149.7" r="0.6" fill="#fff" fill-opacity="0.90"/><circle cx="69.1" cy="62.6" r="0.7" fill="#fff" fill-opacity="0.64"/><circle cx="133.6" cy="68.6" r="0.7" fill="#fff" fill-opacity="0.43"/><circle cx="142.5" cy="103.3" r="0.45" fill="#fff" fill-opacity="0.40"/><circle cx="46.5" cy="121.3" r="0.4" fill="#fff" fill-opacity="0.51"/><circle cx="101.6" cy="33.5" r="0.4" fill="#fff" fill-opacity="0.45"/><circle cx="101.8" cy="14.0" r="0.9" fill="#fff" fill-opacity="0.65"/><circle cx="130.4" cy="72.2" r="0.4" fill="#fff" fill-opacity="0.66"/><circle cx="84.9" cy="21.1" r="0.7" fill="#fff" fill-opacity="0.70"/><circle cx="7.3" cy="83.0" r="0.4" fill="#fff" fill-opacity="0.88"/><circle cx="79.5" cy="103.6" r="0.45" fill="#fff" fill-opacity="0.44"/><circle cx="74.8" cy="20.0" r="0.4" fill="#fff" fill-opacity="0.51"/><circle cx="70.9" cy="121.3" r="0.7" fill="#fff" fill-opacity="0.49"/><circle cx="57.6" cy="94.6" r="0.6" fill="#fff" fill-opacity="0.94"/><circle cx="109.1" cy="77.1" r="0.9" fill="#fff" fill-opacity="0.46"/><circle cx="16.0" cy="124.3" r="0.9" fill="#fff" fill-opacity="0.97"/><circle cx="26.4" cy="30.7" r="0.5" fill="#fff" fill-opacity="0.63"/><circle cx="65.0" cy="60.5" r="0.5" fill="#fff" fill-opacity="0.88"/><circle cx="85.5" cy="71.9" r="0.5" fill="#fff" fill-opacity="0.69"/><circle cx="74.3" cy="42.5" r="0.6" fill="#fff" fill-opacity="0.81"/><circle cx="106.3" cy="100.1" r="0.4" fill="#fff" fill-opacity="0.74"/><circle cx="114.3" cy="32.3" r="0.6" fill="#fff" fill-opacity="0.73"/><circle cx="98.1" cy="95.1" r="0.9" fill="#fff" fill-opacity="0.52"/><circle cx="109.7" cy="82.0" r="0.9" fill="#fff" fill-opacity="0.85"/><circle cx="125.1" cy="127.0" r="0.7" fill="#fff" fill-opacity="0.55"/><circle cx="104.7" cy="151.6" r="0.45" fill="#fff" fill-opacity="0.76"/><circle cx="82.7" cy="28.3" r="0.4" fill="#fff" fill-opacity="0.99"/><circle cx="136.7" cy="70.5" r="0.5" fill="#fff" fill-opacity="0.98"/><circle cx="23.9" cy="49.3" r="0.5" fill="#fff" fill-opacity="0.90"/><circle cx="78.8" cy="10.3" r="0.6" fill="#fff" fill-opacity="0.78"/><circle cx="5.1" cy="45.2" r="0.4" fill="#fff" fill-opacity="0.76"/><circle cx="111.6" cy="143.5" r="0.4" fill="#fff" fill-opacity="0.49"/><circle cx="50.6" cy="81.8" r="0.6" fill="#fff" fill-opacity="0.74"/><circle cx="113.7" cy="135.6" r="0.6" fill="#fff" fill-opacity="0.85"/><circle cx="105.4" cy="119.5" r="0.6" fill="#fff" fill-opacity="0.92"/><circle cx="147.5" cy="58.2" r="0.7" fill="#fff" fill-opacity="0.52"/><circle cx="29.0" cy="72.4" r="0.45" fill="#fff" fill-opacity="0.84"/><circle cx="129.2" cy="51.3" r="0.4" fill="#fff" fill-opacity="0.46"/><circle cx="92.0" cy="130.7" r="0.45" fill="#fff" fill-opacity="0.85"/><circle cx="99.4" cy="87.7" r="0.45" fill="#fff" fill-opacity="0.79"/><circle cx="46.8" cy="31.5" r="0.5" fill="#fff" fill-opacity="0.41"/><circle cx="119.9" cy="4.4" r="0.5" fill="#fff" fill-opacity="0.39"/><circle cx="81.1" cy="120.4" r="0.9" fill="#fff" fill-opacity="0.57"/><circle cx="67.0" cy="63.7" r="0.9" fill="#fff" fill-opacity="0.36"/><circle cx="88.1" cy="20.0" r="0.45" fill="#fff" fill-opacity="0.46"/><circle cx="117.2" cy="109.6" r="0.9" fill="#fff" fill-opacity="0.73"/><circle cx="139.0" cy="98.1" r="0.6" fill="#fff" fill-opacity="0.66"/><circle cx="119.8" cy="36.1" r="0.7" fill="#fff" fill-opacity="0.54"/><circle cx="146.6" cy="140.7" r="0.45" fill="#fff" fill-opacity="0.75"/><circle cx="140.3" cy="50.9" r="0.7" fill="#fff" fill-opacity="0.81"/><circle cx="79.6" cy="35.7" r="0.45" fill="#fff" fill-opacity="0.71"/><circle cx="39.7" cy="37.9" r="0.7" fill="#fff" fill-opacity="0.83"/><circle cx="125.3" cy="18.1" r="0.6" fill="#fff" fill-opacity="0.60"/><circle cx="72.2" cy="57.7" r="0.45" fill="#fff" fill-opacity="0.51"/><circle cx="8.4" cy="79.8" r="0.4" fill="#fff" fill-opacity="0.74"/><circle cx="82.6" cy="0.5" r="0.6" fill="#fff" fill-opacity="0.81"/><circle cx="61.0" cy="78.2" r="0.4" fill="#fff" fill-opacity="0.59"/><circle cx="54.9" cy="143.2" r="0.6" fill="#fff" fill-opacity="0.73"/><circle cx="107.1" cy="111.6" r="0.45" fill="#fff" fill-opacity="0.53"/><circle cx="4.5" cy="6.3" r="0.9" fill="#fff" fill-opacity="0.44"/><circle cx="48.9" cy="81.7" r="0.7" fill="#fff" fill-opacity="0.44"/><circle cx="44.9" cy="115.8" r="0.9" fill="#fff" fill-opacity="0.71"/><circle cx="13.2" cy="101.8" r="0.6" fill="#fff" fill-opacity="0.81"/><circle cx="5.2" cy="77.7" r="0.5" fill="#fff" fill-opacity="0.66"/><circle cx="143.5" cy="54.0" r="0.5" fill="#fff" fill-opacity="0.80"/><circle cx="14.8" cy="54.7" r="0.7" fill="#fff" fill-opacity="0.86"/><circle cx="55.2" cy="144.0" r="0.9" fill="#fff" fill-opacity="0.53"/><circle cx="72.7" cy="43.0" r="0.7" fill="#fff" fill-opacity="0.98"/><circle cx="3.9" cy="51.7" r="0.9" fill="#fff" fill-opacity="0.36"/><circle cx="102.2" cy="151.9" r="0.9" fill="#fff" fill-opacity="0.38"/><circle cx="100.7" cy="104.9" r="0.7" fill="#fff" fill-opacity="0.75"/><circle cx="66.2" cy="63.8" r="0.45" fill="#fff" fill-opacity="0.46"/><circle cx="6.8" cy="90.1" r="0.9" fill="#fff" fill-opacity="0.89"/><circle cx="102.3" cy="44.8" r="0.4" fill="#fff" fill-opacity="0.98"/><circle cx="86.0" cy="141.9" r="0.45" fill="#fff" fill-opacity="0.61"/><circle cx="138.2" cy="16.9" r="0.7" fill="#fff" fill-opacity="0.94"/><circle cx="36.9" cy="83.6" r="0.4" fill="#fff" fill-opacity="0.35"/><circle cx="61.6" cy="76.0" r="0.5" fill="#fff" fill-opacity="0.73"/><circle cx="33.6" cy="79.9" r="0.7" fill="#fff" fill-opacity="0.95"/><circle cx="64.9" cy="119.0" r="0.45" fill="#fff" fill-opacity="0.63"/><circle cx="69.9" cy="56.7" r="0.7" fill="#fff" fill-opacity="0.47"/><circle cx="124.3" cy="143.8" r="0.7" fill="#fff" fill-opacity="0.97"/><circle cx="121.5" cy="98.4" r="0.45" fill="#fff" fill-opacity="0.67"/><circle cx="150.6" cy="129.6" r="0.45" fill="#fff" fill-opacity="0.36"/><circle cx="107.2" cy="148.6" r="0.9" fill="#fff" fill-opacity="0.62"/><circle cx="95.8" cy="149.1" r="0.6" fill="#fff" fill-opacity="0.65"/><circle cx="64.3" cy="41.0" r="0.45" fill="#fff" fill-opacity="0.58"/><circle cx="96.1" cy="4.8" r="0.6" fill="#fff" fill-opacity="0.75"/><circle cx="4.2" cy="45.9" r="0.4" fill="#fff" fill-opacity="0.98"/><circle cx="83.3" cy="86.5" r="0.9" fill="#fff" fill-opacity="0.53"/><circle cx="70.9" cy="69.5" r="0.7" fill="#fff" fill-opacity="0.90"/><circle cx="70.2" cy="100.8" r="0.7" fill="#fff" fill-opacity="0.90"/><circle cx="24.2" cy="43.8" r="0.5" fill="#fff" fill-opacity="0.62"/><circle cx="76.8" cy="136.5" r="0.9" fill="#fff" fill-opacity="0.98"/><circle cx="100.3" cy="58.8" r="0.6" fill="#fff" fill-opacity="0.74"/><circle cx="94.9" cy="69.1" r="0.9" fill="#fff" fill-opacity="0.98"/><circle cx="59.4" cy="93.7" r="0.9" fill="#fff" fill-opacity="0.80"/><circle cx="55.1" cy="121.3" r="0.5" fill="#fff" fill-opacity="0.46"/><circle cx="35.5" cy="136.2" r="0.45" fill="#fff" fill-opacity="0.62"/><circle cx="75.8" cy="150.2" r="0.45" fill="#fff" fill-opacity="0.61"/><circle cx="138.6" cy="86.7" r="0.6" fill="#fff" fill-opacity="0.54"/><circle cx="108.6" cy="147.4" r="0.5" fill="#fff" fill-opacity="0.79"/><circle cx="101.4" cy="60.9" r="0.4" fill="#fff" fill-opacity="0.48"/><circle cx="15.4" cy="1.6" r="0.5" fill="#fff" fill-opacity="0.56"/><circle cx="48.2" cy="61.7" r="0.9" fill="#fff" fill-opacity="0.89"/><circle cx="49.5" cy="12.2" r="0.7" fill="#fff" fill-opacity="0.66"/><circle cx="94.2" cy="35.8" r="0.4" fill="#fff" fill-opacity="0.74"/><circle cx="52.4" cy="46.1" r="0.45" fill="#fff" fill-opacity="0.81"/><circle cx="7.8" cy="50.1" r="0.6" fill="#fff" fill-opacity="0.77"/><circle cx="93.2" cy="0.8" r="0.6" fill="#fff" fill-opacity="0.77"/><circle cx="87.4" cy="33.9" r="0.7" fill="#fff" fill-opacity="0.56"/><circle cx="50.8" cy="118.7" r="0.6" fill="#fff" fill-opacity="0.72"/><circle cx="110.4" cy="70.7" r="0.5" fill="#fff" fill-opacity="0.41"/><circle cx="32.5" cy="55.8" r="0.5" fill="#fff" fill-opacity="0.90"/><circle cx="149.1" cy="27.5" r="0.45" fill="#fff" fill-opacity="0.70"/><circle cx="98.6" cy="94.9" r="0.45" fill="#fff" fill-opacity="0.73"/><circle cx="36.2" cy="131.2" r="0.7" fill="#fff" fill-opacity="0.48"/><circle cx="131.2" cy="0.2" r="0.6" fill="#fff" fill-opacity="0.83"/><circle cx="98.7" cy="102.9" r="0.9" fill="#fff" fill-opacity="0.81"/><circle cx="140.6" cy="128.3" r="0.7" fill="#fff" fill-opacity="0.35"/><circle cx="111.6" cy="139.5" r="0.9" fill="#fff" fill-opacity="0.49"/><circle cx="94.4" cy="69.4" r="0.9" fill="#fff" fill-opacity="0.48"/><circle cx="28.1" cy="60.1" r="0.4" fill="#fff" fill-opacity="0.36"/><circle cx="133.4" cy="46.3" r="0.7" fill="#fff" fill-opacity="0.59"/><circle cx="57.8" cy="11.6" r="0.6" fill="#fff" fill-opacity="0.46"/><circle cx="122.4" cy="133.6" r="0.6" fill="#fff" fill-opacity="0.94"/><circle cx="97.4" cy="40.6" r="0.6" fill="#fff" fill-opacity="0.70"/><circle cx="138.6" cy="136.3" r="0.9" fill="#fff" fill-opacity="0.87"/><circle cx="43.5" cy="4.1" r="0.7" fill="#fff" fill-opacity="0.49"/><circle cx="63.4" cy="19.1" r="0.7" fill="#fff" fill-opacity="0.55"/><circle cx="140.6" cy="130.3" r="0.9" fill="#fff" fill-opacity="0.57"/><circle cx="119.1" cy="23.4" r="0.45" fill="#fff" fill-opacity="0.90"/><circle cx="53.3" cy="46.6" r="0.9" fill="#fff" fill-opacity="0.77"/><circle cx="129.2" cy="23.6" r="0.45" fill="#fff" fill-opacity="0.37"/><circle cx="18.1" cy="15.7" r="0.4" fill="#fff" fill-opacity="0.68"/><circle cx="140.1" cy="148.2" r="0.9" fill="#fff" fill-opacity="0.75"/><circle cx="53.4" cy="145.5" r="0.9" fill="#fff" fill-opacity="0.83"/><circle cx="47.2" cy="115.7" r="0.4" fill="#fff" fill-opacity="0.57"/><circle cx="22.7" cy="11.2" r="0.7" fill="#fff" fill-opacity="0.84"/><circle cx="20.8" cy="112.2" r="0.6" fill="#fff" fill-opacity="0.79"/><circle cx="73.1" cy="44.8" r="0.4" fill="#fff" fill-opacity="0.93"/><circle cx="22.9" cy="112.3" r="0.4" fill="#fff" fill-opacity="0.88"/><circle cx="136.5" cy="53.5" r="0.9" fill="#fff" fill-opacity="0.45"/><circle cx="45.7" cy="86.1" r="0.7" fill="#fff" fill-opacity="0.43"/><circle cx="150.8" cy="34.8" r="0.9" fill="#fff" fill-opacity="0.86"/><circle cx="34.9" cy="50.9" r="0.4" fill="#fff" fill-opacity="0.92"/><circle cx="101.4" cy="31.9" r="0.9" fill="#fff" fill-opacity="0.78"/><circle cx="126.7" cy="50.8" r="0.6" fill="#fff" fill-opacity="0.77"/><circle cx="52.4" cy="28.1" r="0.4" fill="#fff" fill-opacity="0.78"/><circle cx="6.5" cy="104.1" r="0.6" fill="#fff" fill-opacity="0.44"/><circle cx="116.4" cy="112.1" r="0.9" fill="#fff" fill-opacity="0.52"/><circle cx="82.1" cy="137.5" r="0.4" fill="#fff" fill-opacity="0.68"/><circle cx="86.7" cy="94.1" r="0.45" fill="#fff" fill-opacity="0.78"/><circle cx="94.4" cy="107.9" r="0.7" fill="#fff" fill-opacity="0.97"/><circle cx="19.7" cy="36.1" r="0.9" fill="#fff" fill-opacity="0.65"/><circle cx="61.7" cy="16.2" r="0.45" fill="#fff" fill-opacity="0.38"/><circle cx="16.3" cy="2.8" r="0.4" fill="#fff" fill-opacity="0.84"/><circle cx="39.4" cy="84.3" r="0.5" fill="#fff" fill-opacity="0.63"/><circle cx="6.6" cy="25.4" r="0.45" fill="#fff" fill-opacity="0.96"/><circle cx="126.3" cy="26.1" r="0.45" fill="#fff" fill-opacity="1.00"/><circle cx="98.0" cy="116.1" r="0.6" fill="#fff" fill-opacity="0.35"/><circle cx="64.2" cy="104.8" r="0.4" fill="#fff" fill-opacity="0.47"/><circle cx="0.3" cy="120.8" r="0.6" fill="#fff" fill-opacity="0.88"/><circle cx="128.8" cy="26.5" r="0.5" fill="#fff" fill-opacity="0.88"/><circle cx="86.6" cy="146.7" r="0.5" fill="#fff" fill-opacity="0.55"/><circle cx="63.3" cy="73.5" r="0.6" fill="#fff" fill-opacity="0.85"/><circle cx="149.8" cy="26.3" r="0.6" fill="#fff" fill-opacity="0.54"/><circle cx="87.6" cy="80.1" r="0.7" fill="#fff" fill-opacity="0.80"/><circle cx="82.0" cy="85.6" r="0.5" fill="#fff" fill-opacity="0.95"/><circle cx="134.7" cy="69.9" r="0.4" fill="#fff" fill-opacity="0.93"/><circle cx="129.0" cy="82.2" r="0.7" fill="#fff" fill-opacity="0.77"/><circle cx="24.0" cy="33.2" r="0.4" fill="#fff" fill-opacity="0.83"/><circle cx="149.5" cy="65.9" r="0.7" fill="#fff" fill-opacity="0.93"/><circle cx="77.2" cy="135.6" r="0.45" fill="#fff" fill-opacity="0.91"/><circle cx="46.8" cy="69.3" r="0.7" fill="#fff" fill-opacity="0.41"/><circle cx="56.8" cy="28.3" r="0.7" fill="#fff" fill-opacity="0.38"/><circle cx="85.4" cy="136.4" r="0.7" fill="#fff" fill-opacity="0.85"/><circle cx="35.4" cy="24.5" r="0.6" fill="#fff" fill-opacity="0.86"/><circle cx="136.2" cy="142.1" r="0.7" fill="#fff" fill-opacity="0.99"/><circle cx="34.8" cy="136.2" r="0.7" fill="#fff" fill-opacity="0.53"/><circle cx="39.8" cy="3.9" r="0.7" fill="#fff" fill-opacity="0.97"/><circle cx="77.8" cy="109.0" r="0.4" fill="#fff" fill-opacity="0.86"/><circle cx="29.6" cy="49.2" r="0.5" fill="#fff" fill-opacity="0.83"/><circle cx="137.6" cy="7.0" r="0.5" fill="#fff" fill-opacity="0.47"/><circle cx="7.2" cy="55.8" r="0.9" fill="#fff" fill-opacity="0.64"/><circle cx="102.7" cy="133.8" r="0.4" fill="#fff" fill-opacity="0.82"/><circle cx="1.7" cy="99.3" r="0.45" fill="#fff" fill-opacity="0.60"/><circle cx="103.6" cy="20.5" r="0.9" fill="#fff" fill-opacity="1.00"/><circle cx="11.2" cy="147.9" r="0.4" fill="#fff" fill-opacity="0.62"/><circle cx="126.5" cy="147.1" r="0.7" fill="#fff" fill-opacity="0.45"/><circle cx="4.6" cy="32.5" r="0.9" fill="#fff" fill-opacity="0.77"/><circle cx="115.3" cy="72.4" r="0.9" fill="#fff" fill-opacity="0.94"/><circle cx="93.1" cy="89.6" r="0.4" fill="#fff" fill-opacity="0.90"/><circle cx="11.7" cy="3.5" r="0.7" fill="#fff" fill-opacity="0.90"/><circle cx="117.0" cy="134.8" r="0.4" fill="#fff" fill-opacity="0.45"/><circle cx="44.9" cy="18.2" r="0.9" fill="#fff" fill-opacity="0.73"/><circle cx="141.3" cy="136.6" r="0.4" fill="#fff" fill-opacity="0.60"/><circle cx="137.3" cy="96.4" r="0.45" fill="#fff" fill-opacity="0.62"/><circle cx="35.9" cy="134.7" r="0.7" fill="#fff" fill-opacity="0.82"/><circle cx="82.6" cy="5.0" r="0.5" fill="#fff" fill-opacity="0.42"/><circle cx="89.0" cy="7.2" r="0.9" fill="#fff" fill-opacity="0.50"/><circle cx="125.3" cy="94.9" r="0.4" fill="#fff" fill-opacity="0.46"/><circle cx="18.7" cy="30.4" r="0.45" fill="#fff" fill-opacity="0.53"/><circle cx="105.1" cy="133.2" r="0.45" fill="#fff" fill-opacity="0.76"/><circle cx="86.6" cy="145.7" r="0.4" fill="#fff" fill-opacity="0.58"/><circle cx="105.2" cy="31.9" r="0.6" fill="#fff" fill-opacity="0.53"/><circle cx="12.8" cy="124.5" r="0.7" fill="#fff" fill-opacity="0.55"/><circle cx="56.5" cy="82.3" r="0.5" fill="#fff" fill-opacity="1.00"/><circle cx="6.5" cy="47.2" r="0.4" fill="#fff" fill-opacity="1.00"/><circle cx="76.1" cy="21.3" r="0.7" fill="#fff" fill-opacity="0.58"/><circle cx="146.5" cy="94.8" r="0.7" fill="#fff" fill-opacity="0.63"/><circle cx="98.0" cy="15.1" r="0.7" fill="#fff" fill-opacity="0.47"/><circle cx="91.9" cy="140.3" r="0.9" fill="#fff" fill-opacity="0.44"/><circle cx="70.1" cy="92.3" r="0.6" fill="#fff" fill-opacity="0.37"/><circle cx="57.1" cy="72.9" r="0.7" fill="#fff" fill-opacity="0.77"/><circle cx="65.8" cy="30.5" r="0.5" fill="#fff" fill-opacity="0.57"/><circle cx="66.4" cy="37.6" r="0.5" fill="#fff" fill-opacity="0.66"/><circle cx="49.5" cy="0.2" r="0.4" fill="#fff" fill-opacity="0.35"/><circle cx="31.5" cy="8.6" r="0.6" fill="#fff" fill-opacity="0.96"/><circle cx="115.4" cy="31.4" r="0.4" fill="#fff" fill-opacity="0.37"/><circle cx="17.1" cy="17.0" r="0.7" fill="#fff" fill-opacity="0.96"/><circle cx="64.5" cy="78.2" r="0.4" fill="#fff" fill-opacity="0.84"/><circle cx="113.1" cy="26.3" r="0.45" fill="#fff" fill-opacity="0.89"/><circle cx="12.3" cy="108.5" r="0.7" fill="#fff" fill-opacity="0.95"/><circle cx="138.2" cy="17.2" r="0.45" fill="#fff" fill-opacity="0.85"/><circle cx="45.9" cy="111.9" r="0.4" fill="#fff" fill-opacity="0.46"/><circle cx="147.2" cy="138.8" r="0.9" fill="#fff" fill-opacity="0.42"/><circle cx="99.2" cy="149.5" r="0.6" fill="#fff" fill-opacity="0.36"/><circle cx="135.8" cy="0.4" r="0.45" fill="#fff" fill-opacity="0.88"/><circle cx="50.4" cy="10.9" r="0.9" fill="#fff" fill-opacity="0.53"/><circle cx="115.3" cy="131.5" r="0.45" fill="#fff" fill-opacity="0.97"/><circle cx="12.8" cy="150.7" r="0.5" fill="#fff" fill-opacity="0.90"/><circle cx="150.9" cy="41.5" r="0.7" fill="#fff" fill-opacity="0.45"/><circle cx="49.2" cy="33.3" r="0.45" fill="#fff" fill-opacity="0.48"/><circle cx="74.6" cy="17.2" r="0.6" fill="#fff" fill-opacity="0.78"/><circle cx="48.5" cy="123.6" r="0.6" fill="#fff" fill-opacity="0.38"/><circle cx="69.8" cy="144.6" r="0.9" fill="#fff" fill-opacity="0.80"/><circle cx="36.3" cy="84.0" r="0.7" fill="#fff" fill-opacity="0.77"/><circle cx="131.3" cy="8.5" r="0.9" fill="#fff" fill-opacity="0.88"/><circle cx="147.0" cy="40.8" r="0.6" fill="#fff" fill-opacity="0.54"/><circle cx="114.0" cy="134.4" r="0.45" fill="#fff" fill-opacity="0.84"/><circle cx="133.8" cy="125.6" r="0.45" fill="#fff" fill-opacity="0.92"/><circle cx="37.0" cy="18.0" r="0.4" fill="#fff" fill-opacity="0.53"/><circle cx="106.4" cy="59.3" r="0.6" fill="#fff" fill-opacity="0.73"/><circle cx="4.9" cy="104.3" r="0.9" fill="#fff" fill-opacity="0.77"/><circle cx="9.1" cy="31.5" r="0.9" fill="#fff" fill-opacity="0.52"/><circle cx="116.2" cy="27.7" r="0.6" fill="#fff" fill-opacity="1.00"/><circle cx="102.5" cy="107.2" r="0.7" fill="#fff" fill-opacity="0.75"/><circle cx="24.9" cy="63.5" r="0.45" fill="#fff" fill-opacity="0.35"/><circle cx="31.7" cy="40.5" r="0.45" fill="#fff" fill-opacity="0.96"/><circle cx="32.7" cy="73.3" r="0.7" fill="#fff" fill-opacity="0.84"/><circle cx="68.7" cy="115.5" r="0.4" fill="#fff" fill-opacity="0.38"/><circle cx="62.0" cy="80.3" r="0.9" fill="#fff" fill-opacity="0.96"/><circle cx="32.9" cy="64.5" r="0.6" fill="#fff" fill-opacity="0.65"/><circle cx="126.2" cy="25.9" r="0.45" fill="#fff" fill-opacity="0.54"/><circle cx="143.4" cy="108.9" r="0.4" fill="#fff" fill-opacity="0.69"/><circle cx="4.2" cy="110.4" r="0.4" fill="#fff" fill-opacity="0.75"/><circle cx="92.5" cy="95.4" r="0.6" fill="#fff" fill-opacity="0.56"/><circle cx="91.1" cy="87.7" r="0.45" fill="#fff" fill-opacity="0.39"/><circle cx="38.0" cy="89.1" r="0.5" fill="#fff" fill-opacity="0.81"/><circle cx="8.3" cy="122.8" r="0.45" fill="#fff" fill-opacity="0.92"/><circle cx="7.5" cy="54.9" r="0.4" fill="#fff" fill-opacity="0.85"/><circle cx="73.8" cy="91.9" r="0.9" fill="#fff" fill-opacity="0.38"/><circle cx="98.6" cy="10.4" r="0.45" fill="#fff" fill-opacity="0.69"/><circle cx="37.4" cy="39.9" r="0.5" fill="#fff" fill-opacity="0.57"/><circle cx="109.6" cy="103.3" r="0.6" fill="#fff" fill-opacity="0.82"/><circle cx="32.2" cy="83.7" r="0.7" fill="#fff" fill-opacity="0.90"/><circle cx="113.9" cy="112.2" r="0.4" fill="#fff" fill-opacity="0.62"/><circle cx="64.8" cy="93.1" r="0.7" fill="#fff" fill-opacity="0.53"/><circle cx="115.3" cy="145.5" r="0.5" fill="#fff" fill-opacity="0.37"/><circle cx="150.9" cy="92.6" r="0.5" fill="#fff" fill-opacity="0.49"/><circle cx="144.1" cy="14.0" r="0.7" fill="#fff" fill-opacity="0.58"/><circle cx="139.9" cy="51.5" r="0.4" fill="#fff" fill-opacity="0.57"/><circle cx="110.0" cy="27.5" r="0.9" fill="#fff" fill-opacity="0.88"/><circle cx="39.0" cy="74.5" r="0.7" fill="#fff" fill-opacity="0.91"/><circle cx="81.6" cy="44.7" r="0.5" fill="#fff" fill-opacity="0.69"/><circle cx="89.4" cy="84.4" r="0.6" fill="#fff" fill-opacity="0.88"/><circle cx="12.7" cy="12.2" r="0.7" fill="#fff" fill-opacity="0.45"/><circle cx="48.8" cy="73.5" r="0.9" fill="#fff" fill-opacity="0.73"/><circle cx="113.2" cy="61.1" r="0.7" fill="#fff" fill-opacity="0.90"/><circle cx="40.6" cy="139.3" r="0.6" fill="#fff" fill-opacity="0.36"/></svg><div class="t" style="left:0;top:132px;width:152px;text-align:center;font-weight:bold;color:#fff;text-shadow:0 0 2px #000">FITS</div></div>
<div class="t" style="left:523.0px;top:334.5px;width:180px;text-align:center">hh1407_optical_R.fits</div>
<div class="t" style="left:525.5px;top:376px;width:180px;text-align:center;font-size:13px;line-height:17px">4/2/21 7:08 AM<br>Mod.: 4/2/21 7:08 AM<br>3,600x3,600 (13.0Mpx)<br>1:1 (1)<br>24.7 MiB</div>
<div class="a" style="left:717px;top:163px;width:152px;height:152px;overflow:hidden;box-shadow:0 0 0 1px rgba(0,0,0,0.3),1px 1px 2px rgba(0,0,0,0.2)"><svg style="left:0;top:0" width="152" height="152"><defs><filter id="f3" x="-20" y="-20" width="192" height="192" filterUnits="userSpaceOnUse"><feTurbulence type="turbulence" baseFrequency="0.1" numOctaves="3" seed="4"/><feColorMatrix type="matrix" values="0 0 0 0 1  0 0 0 0 1  0 0 0 0 1  -2.6 0 0 0 0.8"/><feGaussianBlur stdDeviation="0.5"/></filter><filter id="bf3" x="-20" y="-20" width="192" height="192" filterUnits="userSpaceOnUse"><feGaussianBlur stdDeviation="13"/></filter><filter id="ef3" x="-20" y="-20" width="192" height="192" filterUnits="userSpaceOnUse"><feGaussianBlur stdDeviation="7"/></filter><mask id="kf3"><rect width="152" height="152" fill="#000"/><g filter="url(#ef3)"><path d="M8 70C20 40 60 30 100 36C130 40 152 40 160 70L160 130C140 128 120 118 100 112C80 106 50 110 30 100C12 92 6 85 8 70Z" fill="#909090"/><path d="M60 50C90 40 130 50 160 70V110C130 108 100 100 80 92C64 84 56 66 60 50Z" fill="#ffffff"/><path d="M115 115C130 125 140 140 148 156" stroke="#808080" stroke-width="10" fill="none"/></g></mask></defs><rect width="152" height="152" fill="#0e0e0e"/><g filter="url(#bf3)"><path d="M8 70C20 40 60 30 100 36C130 40 152 40 160 70L160 130C140 128 120 118 100 112C80 106 50 110 30 100C12 92 6 85 8 70Z" fill="#505050"/><path d="M60 50C90 40 130 50 160 70V110C130 108 100 100 80 92C64 84 56 66 60 50Z" fill="#767676"/><path d="M100 0H152V30C130 25 110 20 100 0Z" fill="#262626"/></g><rect width="152" height="152" filter="url(#f3)" mask="url(#kf3)"/><circle cx="36.2" cy="82.7" r="0.5" fill="#fff" fill-opacity="0.95"/><circle cx="72.1" cy="88.3" r="0.7" fill="#fff" fill-opacity="0.36"/><circle cx="127.3" cy="39.4" r="0.45" fill="#fff" fill-opacity="0.47"/><circle cx="109.0" cy="82.2" r="0.7" fill="#fff" fill-opacity="0.66"/><circle cx="97.1" cy="22.9" r="0.9" fill="#fff" fill-opacity="0.45"/><circle cx="140.7" cy="59.3" r="0.4" fill="#fff" fill-opacity="0.79"/><circle cx="9.7" cy="115.3" r="0.7" fill="#fff" fill-opacity="0.38"/><circle cx="118.6" cy="125.2" r="0.5" fill="#fff" fill-opacity="0.66"/><circle cx="109.3" cy="133.6" r="0.9" fill="#fff" fill-opacity="0.86"/><circle cx="64.9" cy="110.7" r="0.7" fill="#fff" fill-opacity="0.64"/><circle cx="142.2" cy="133.6" r="0.4" fill="#fff" fill-opacity="0.37"/><circle cx="75.2" cy="39.2" r="0.9" fill="#fff" fill-opacity="0.63"/><circle cx="95.3" cy="45.8" r="0.7" fill="#fff" fill-opacity="0.89"/><circle cx="87.3" cy="81.2" r="0.6" fill="#fff" fill-opacity="0.73"/><circle cx="137.4" cy="103.7" r="0.4" fill="#fff" fill-opacity="0.91"/><circle cx="150.6" cy="102.0" r="0.45" fill="#fff" fill-opacity="0.80"/><circle cx="49.6" cy="82.3" r="0.7" fill="#fff" fill-opacity="0.72"/><circle cx="108.5" cy="32.1" r="0.7" fill="#fff" fill-opacity="0.52"/><circle cx="18.9" cy="73.3" r="0.9" fill="#fff" fill-opacity="0.99"/><circle cx="13.5" cy="121.7" r="0.6" fill="#fff" fill-opacity="0.93"/><circle cx="3.1" cy="64.9" r="0.6" fill="#fff" fill-opacity="0.92"/><circle cx="6.7" cy="93.4" r="0.4" fill="#fff" fill-opacity="0.60"/><circle cx="89.1" cy="83.7" r="0.5" fill="#fff" fill-opacity="0.68"/><circle cx="151.8" cy="47.1" r="0.4" fill="#fff" fill-opacity="0.42"/><circle cx="81.4" cy="144.2" r="0.6" fill="#fff" fill-opacity="0.54"/><circle cx="40.0" cy="104.8" r="0.5" fill="#fff" fill-opacity="0.55"/><circle cx="145.7" cy="136.3" r="0.6" fill="#fff" fill-opacity="0.59"/><circle cx="132.2" cy="58.7" r="0.7" fill="#fff" fill-opacity="0.79"/><circle cx="15.6" cy="147.9" r="0.7" fill="#fff" fill-opacity="0.53"/><circle cx="96.4" cy="108.8" r="0.5" fill="#fff" fill-opacity="0.63"/><circle cx="39.3" cy="46.1" r="0.5" fill="#fff" fill-opacity="0.36"/><circle cx="63.1" cy="88.2" r="0.4" fill="#fff" fill-opacity="0.59"/><circle cx="89.6" cy="20.3" r="0.9" fill="#fff" fill-opacity="0.76"/><circle cx="70.9" cy="103.3" r="0.5" fill="#fff" fill-opacity="0.75"/><circle cx="42.4" cy="74.4" r="0.7" fill="#fff" fill-opacity="0.39"/><circle cx="102.8" cy="146.4" r="0.5" fill="#fff" fill-opacity="0.76"/><circle cx="45.4" cy="91.4" r="0.45" fill="#fff" fill-opacity="0.59"/><circle cx="47.5" cy="56.1" r="0.7" fill="#fff" fill-opacity="0.52"/><circle cx="119.7" cy="15.9" r="0.4" fill="#fff" fill-opacity="0.98"/><circle cx="103.9" cy="20.0" r="0.7" fill="#fff" fill-opacity="0.49"/><circle cx="122.2" cy="36.3" r="0.45" fill="#fff" fill-opacity="0.79"/><circle cx="98.7" cy="14.7" r="0.7" fill="#fff" fill-opacity="0.56"/><circle cx="50.7" cy="126.7" r="0.6" fill="#fff" fill-opacity="0.88"/><circle cx="146.0" cy="12.2" r="0.9" fill="#fff" fill-opacity="0.77"/><circle cx="134.5" cy="68.6" r="0.45" fill="#fff" fill-opacity="0.86"/><circle cx="5.2" cy="145.6" r="0.5" fill="#fff" fill-opacity="0.87"/><circle cx="127.4" cy="27.9" r="0.5" fill="#fff" fill-opacity="0.57"/><circle cx="125.8" cy="13.0" r="0.7" fill="#fff" fill-opacity="0.57"/><circle cx="19.7" cy="44.4" r="0.5" fill="#fff" fill-opacity="0.65"/><circle cx="96.4" cy="44.1" r="0.7" fill="#fff" fill-opacity="0.62"/><circle cx="139.9" cy="23.7" r="0.4" fill="#fff" fill-opacity="0.66"/><circle cx="126.5" cy="94.6" r="0.7" fill="#fff" fill-opacity="0.63"/><circle cx="144.4" cy="141.0" r="0.45" fill="#fff" fill-opacity="0.37"/><circle cx="69.4" cy="114.5" r="0.9" fill="#fff" fill-opacity="0.69"/><circle cx="43.9" cy="51.8" r="0.45" fill="#fff" fill-opacity="0.91"/><circle cx="130.4" cy="147.6" r="0.4" fill="#fff" fill-opacity="0.88"/><circle cx="6.9" cy="137.3" r="0.9" fill="#fff" fill-opacity="0.68"/><circle cx="30.2" cy="134.3" r="0.6" fill="#fff" fill-opacity="0.73"/><circle cx="2.0" cy="113.3" r="0.45" fill="#fff" fill-opacity="0.68"/><circle cx="36.3" cy="3.0" r="0.7" fill="#fff" fill-opacity="0.62"/></svg><div class="t" style="left:0;top:132px;width:152px;text-align:center;font-weight:bold;color:#fff;text-shadow:0 0 2px #000">FITS</div></div>
<div class="t" style="left:700.5px;top:334.5px;width:180px;text-align:center">flame_ir_B.fits</div>
<div class="t" style="left:703px;top:376px;width:180px;text-align:center;font-size:13px;line-height:17px">4/2/21 7:08 AM<br>Mod.: 4/2/21 7:08 AM<br>3,600x3,600 (13.0Mpx)<br>1:1 (1)<br>24.7 MiB</div>
<div class="a" style="left:361px;top:507px;width:152px;height:152px;overflow:hidden;box-shadow:0 0 0 1px rgba(0,0,0,0.3),1px 1px 2px rgba(0,0,0,0.2)"><svg style="left:0;top:0" width="152" height="152"><rect width="152" height="152" fill="#020202"/><circle cx="35.9" cy="15.7" r="0.6" fill="#fff" fill-opacity="0.66"/><circle cx="13.7" cy="3.0" r="0.7" fill="#fff" fill-opacity="0.95"/><circle cx="121.7" cy="116.3" r="0.45" fill="#fff" fill-opacity="0.69"/><circle cx="54.8" cy="118.5" r="0.4" fill="#fff" fill-opacity="0.52"/><circle cx="143.3" cy="3.9" r="0.8" fill="#fff" fill-opacity="0.87"/><circle cx="121.7" cy="29.4" r="0.5" fill="#fff" fill-opacity="0.54"/><circle cx="131.8" cy="146.1" r="0.5" fill="#fff" fill-opacity="0.41"/><circle cx="92.1" cy="102.1" r="0.7" fill="#fff" fill-opacity="0.51"/><circle cx="37.6" cy="42.6" r="0.7" fill="#fff" fill-opacity="0.90"/><circle cx="1.1" cy="44.4" r="0.8" fill="#fff" fill-opacity="0.92"/><circle cx="128.9" cy="77.3" r="0.6" fill="#fff" fill-opacity="0.63"/><circle cx="43.8" cy="68.6" r="0.45" fill="#fff" fill-opacity="0.55"/><circle cx="123.5" cy="6.6" r="0.4" fill="#fff" fill-opacity="0.65"/><circle cx="151.6" cy="78.9" r="0.8" fill="#fff" fill-opacity="0.66"/><circle cx="52.1" cy="151.6" r="0.45" fill="#fff" fill-opacity="0.39"/><circle cx="138.9" cy="96.5" r="0.6" fill="#fff" fill-opacity="0.53"/><circle cx="54.1" cy="113.5" r="0.5" fill="#fff" fill-opacity="0.76"/><circle cx="30.2" cy="49.2" r="0.4" fill="#fff" fill-opacity="0.81"/><circle cx="42.2" cy="88.5" r="0.45" fill="#fff" fill-opacity="0.43"/><circle cx="142.1" cy="44.2" r="0.4" fill="#fff" fill-opacity="0.38"/><circle cx="106.0" cy="136.2" r="0.5" fill="#fff" fill-opacity="0.83"/><circle cx="145.9" cy="2.8" r="0.5" fill="#fff" fill-opacity="0.56"/><circle cx="23.2" cy="99.1" r="0.7" fill="#fff" fill-opacity="0.79"/><circle cx="11.8" cy="93.9" r="0.6" fill="#fff" fill-opacity="0.54"/><circle cx="38.0" cy="91.0" r="0.45" fill="#fff" fill-opacity="0.57"/><circle cx="1.4" cy="6.8" r="0.45" fill="#fff" fill-opacity="0.59"/><circle cx="122.3" cy="151.6" r="0.7" fill="#fff" fill-opacity="0.41"/><circle cx="149.2" cy="64.4" r="0.45" fill="#fff" fill-opacity="0.42"/><circle cx="9.5" cy="112.0" r="0.7" fill="#fff" fill-opacity="0.79"/><circle cx="22.7" cy="6.2" r="0.6" fill="#fff" fill-opacity="0.73"/><circle cx="48.9" cy="5.4" r="0.7" fill="#fff" fill-opacity="0.54"/><circle cx="151.5" cy="99.0" r="0.45" fill="#fff" fill-opacity="0.66"/><circle cx="36.8" cy="62.4" r="0.4" fill="#fff" fill-opacity="0.49"/><circle cx="67.4" cy="98.4" r="0.6" fill="#fff" fill-opacity="0.89"/><circle cx="75.8" cy="4.8" r="0.5" fill="#fff" fill-opacity="0.51"/><circle cx="79.9" cy="117.4" r="0.6" fill="#fff" fill-opacity="0.92"/><circle cx="21.5" cy="7.8" r="0.5" fill="#fff" fill-opacity="0.72"/><circle cx="150.6" cy="61.3" r="0.8" fill="#fff" fill-opacity="0.78"/><circle cx="120.2" cy="113.2" r="0.6" fill="#fff" fill-opacity="0.60"/><circle cx="65.4" cy="141.3" r="0.7" fill="#fff" fill-opacity="0.93"/><circle cx="140.5" cy="51.2" r="0.8" fill="#fff" fill-opacity="0.66"/><circle cx="136.9" cy="47.9" r="0.6" fill="#fff" fill-opacity="0.69"/><circle cx="99.5" cy="104.3" r="0.5" fill="#fff" fill-opacity="0.57"/><circle cx="59.6" cy="75.5" r="0.5" fill="#fff" fill-opacity="0.98"/><circle cx="101.6" cy="6.8" r="0.7" fill="#fff" fill-opacity="0.43"/><circle cx="147.2" cy="101.4" r="0.4" fill="#fff" fill-opacity="0.92"/><circle cx="104.6" cy="70.6" r="0.6" fill="#fff" fill-opacity="0.84"/><circle cx="141.0" cy="33.2" r="0.4" fill="#fff" fill-opacity="0.49"/><circle cx="23.8" cy="92.7" r="0.5" fill="#fff" fill-opacity="0.43"/><circle cx="123.1" cy="119.0" r="0.45" fill="#fff" fill-opacity="0.71"/><circle cx="133.6" cy="30.7" r="0.8" fill="#fff" fill-opacity="0.75"/><circle cx="124.4" cy="85.5" r="0.6" fill="#fff" fill-opacity="0.94"/><circle cx="66.8" cy="12.0" r="0.8" fill="#fff" fill-opacity="0.74"/><circle cx="74.3" cy="131.4" r="0.7" fill="#fff" fill-opacity="0.85"/><circle cx="6.3" cy="12.1" r="0.7" fill="#fff" fill-opacity="0.94"/><circle cx="45.1" cy="52.7" r="0.4" fill="#fff" fill-opacity="0.41"/><circle cx="82.6" cy="57.9" r="0.5" fill="#fff" fill-opacity="0.60"/><circle cx="115.3" cy="130.0" r="0.6" fill="#fff" fill-opacity="0.41"/><circle cx="17.4" cy="94.4" r="0.5" fill="#fff" fill-opacity="0.68"/><circle cx="66.0" cy="130.4" r="0.6" fill="#fff" fill-opacity="0.39"/><circle cx="134.0" cy="29.8" r="0.5" fill="#fff" fill-opacity="0.95"/><circle cx="72.8" cy="18.0" r="0.7" fill="#fff" fill-opacity="0.46"/><circle cx="132.9" cy="26.8" r="0.45" fill="#fff" fill-opacity="0.56"/><circle cx="130.7" cy="39.3" r="0.4" fill="#fff" fill-opacity="0.81"/><circle cx="0.8" cy="47.4" r="0.7" fill="#fff" fill-opacity="0.42"/><circle cx="119.5" cy="91.4" r="0.7" fill="#fff" fill-opacity="0.40"/><circle cx="37.3" cy="128.8" r="0.5" fill="#fff" fill-opacity="0.50"/><circle cx="27.4" cy="131.3" r="0.4" fill="#fff" fill-opacity="0.79"/><circle cx="92.6" cy="47.6" r="0.6" fill="#fff" fill-opacity="0.86"/><circle cx="86.4" cy="142.4" r="0.7" fill="#fff" fill-opacity="0.86"/></svg><div class="t" style="left:0;top:132px;width:152px;text-align:center;font-weight:bold;color:#fff;text-shadow:0 0 2px #000">FITS</div></div>
<div class="t" style="left:344.5px;top:678.5px;width:180px;text-align:center">sn1006_xray.fits</div>
<div class="t" style="left:347px;top:720px;width:180px;text-align:center;font-size:13px;line-height:17px">4/2/21 8:29 AM<br>Mod.: 4/2/21 8:29 AM<br>3,600x3,600 (13.0Mpx)<br>1:1 (1)<br>24.7 MiB</div>
<div class="a" style="left:539px;top:507px;width:152px;height:152px;overflow:hidden;box-shadow:0 0 0 1px rgba(0,0,0,0.3),1px 1px 2px rgba(0,0,0,0.2)"><svg style="left:0;top:0" width="152" height="152"><rect width="152" height="152" fill="#020202"/><circle cx="94.7" cy="112.8" r="0.8" fill="#fff" fill-opacity="0.96"/><circle cx="112.5" cy="140.2" r="0.4" fill="#fff" fill-opacity="0.90"/><circle cx="117.9" cy="37.9" r="0.4" fill="#fff" fill-opacity="0.94"/><circle cx="17.2" cy="71.3" r="0.45" fill="#fff" fill-opacity="0.60"/><circle cx="15.5" cy="37.9" r="0.8" fill="#fff" fill-opacity="0.49"/><circle cx="42.5" cy="139.3" r="0.6" fill="#fff" fill-opacity="0.45"/><circle cx="121.2" cy="21.1" r="0.7" fill="#fff" fill-opacity="0.64"/><circle cx="20.1" cy="147.8" r="0.4" fill="#fff" fill-opacity="0.49"/><circle cx="32.8" cy="149.3" r="0.45" fill="#fff" fill-opacity="0.54"/><circle cx="146.1" cy="82.0" r="0.8" fill="#fff" fill-opacity="0.76"/><circle cx="27.6" cy="147.2" r="0.45" fill="#fff" fill-opacity="0.98"/><circle cx="135.8" cy="45.4" r="0.5" fill="#fff" fill-opacity="0.62"/><circle cx="142.2" cy="40.1" r="0.5" fill="#fff" fill-opacity="0.55"/><circle cx="91.7" cy="0.5" r="0.8" fill="#fff" fill-opacity="0.81"/><circle cx="10.0" cy="54.0" r="0.5" fill="#fff" fill-opacity="0.66"/><circle cx="48.0" cy="73.1" r="0.8" fill="#fff" fill-opacity="0.46"/><circle cx="38.9" cy="142.7" r="0.8" fill="#fff" fill-opacity="0.58"/><circle cx="61.5" cy="83.5" r="0.6" fill="#fff" fill-opacity="0.59"/><circle cx="87.9" cy="1.4" r="0.4" fill="#fff" fill-opacity="0.81"/><circle cx="94.8" cy="145.1" r="0.4" fill="#fff" fill-opacity="0.84"/><circle cx="141.3" cy="143.2" r="0.5" fill="#fff" fill-opacity="0.68"/><circle cx="135.7" cy="38.1" r="0.6" fill="#fff" fill-opacity="0.42"/><circle cx="113.8" cy="121.2" r="0.5" fill="#fff" fill-opacity="0.37"/><circle cx="143.8" cy="13.9" r="0.5" fill="#fff" fill-opacity="0.68"/><circle cx="55.1" cy="22.5" r="0.5" fill="#fff" fill-opacity="0.95"/><circle cx="82.9" cy="47.5" r="0.5" fill="#fff" fill-opacity="0.55"/><circle cx="121.4" cy="95.3" r="0.8" fill="#fff" fill-opacity="0.80"/><circle cx="151.5" cy="24.6" r="0.4" fill="#fff" fill-opacity="0.40"/><circle cx="91.3" cy="140.4" r="0.4" fill="#fff" fill-opacity="0.50"/><circle cx="90.3" cy="125.6" r="0.6" fill="#fff" fill-opacity="0.77"/><circle cx="22.1" cy="148.8" r="0.8" fill="#fff" fill-opacity="0.37"/><circle cx="75.0" cy="127.4" r="0.45" fill="#fff" fill-opacity="0.99"/><circle cx="85.7" cy="20.2" r="0.6" fill="#fff" fill-opacity="0.42"/><circle cx="66.1" cy="22.7" r="0.6" fill="#fff" fill-opacity="0.54"/><circle cx="68.9" cy="151.9" r="0.45" fill="#fff" fill-opacity="0.98"/><circle cx="68.9" cy="74.2" r="0.8" fill="#fff" fill-opacity="0.56"/><circle cx="41.7" cy="71.5" r="0.45" fill="#fff" fill-opacity="0.42"/><circle cx="125.0" cy="80.8" r="0.45" fill="#fff" fill-opacity="0.76"/><circle cx="75.9" cy="51.4" r="0.4" fill="#fff" fill-opacity="0.67"/><circle cx="78.3" cy="83.3" r="0.7" fill="#fff" fill-opacity="0.58"/><circle cx="119.5" cy="117.8" r="0.8" fill="#fff" fill-opacity="0.73"/><circle cx="5.2" cy="46.5" r="0.7" fill="#fff" fill-opacity="0.81"/><circle cx="42.7" cy="73.8" r="0.8" fill="#fff" fill-opacity="0.82"/><circle cx="145.4" cy="51.7" r="0.45" fill="#fff" fill-opacity="0.73"/><circle cx="1.8" cy="83.1" r="0.5" fill="#fff" fill-opacity="0.56"/><circle cx="41.6" cy="43.9" r="0.7" fill="#fff" fill-opacity="0.77"/><circle cx="121.2" cy="52.9" r="0.8" fill="#fff" fill-opacity="0.57"/><circle cx="142.5" cy="62.1" r="0.45" fill="#fff" fill-opacity="0.92"/><circle cx="104.6" cy="148.4" r="0.5" fill="#fff" fill-opacity="0.69"/><circle cx="80.5" cy="25.3" r="0.5" fill="#fff" fill-opacity="0.96"/><circle cx="72.5" cy="105.1" r="0.8" fill="#fff" fill-opacity="0.79"/><circle cx="63.3" cy="93.8" r="0.7" fill="#fff" fill-opacity="0.69"/><circle cx="142.3" cy="46.0" r="0.7" fill="#fff" fill-opacity="0.85"/><circle cx="96.8" cy="109.5" r="0.4" fill="#fff" fill-opacity="0.48"/><circle cx="89.1" cy="94.9" r="0.45" fill="#fff" fill-opacity="0.49"/><circle cx="104.3" cy="95.9" r="0.4" fill="#fff" fill-opacity="0.99"/><circle cx="148.9" cy="25.2" r="0.45" fill="#fff" fill-opacity="0.42"/><circle cx="147.1" cy="73.4" r="0.7" fill="#fff" fill-opacity="0.37"/><circle cx="70.7" cy="57.8" r="0.7" fill="#fff" fill-opacity="0.40"/><circle cx="31.1" cy="109.1" r="0.5" fill="#fff" fill-opacity="0.35"/><circle cx="61.6" cy="42.3" r="0.6" fill="#fff" fill-opacity="0.91"/><circle cx="104.7" cy="83.2" r="0.4" fill="#fff" fill-opacity="0.71"/><circle cx="45.8" cy="44.9" r="0.7" fill="#fff" fill-opacity="0.57"/><circle cx="88.3" cy="145.7" r="0.45" fill="#fff" fill-opacity="0.62"/><circle cx="123.6" cy="97.6" r="0.5" fill="#fff" fill-opacity="0.65"/><circle cx="23.8" cy="58.2" r="0.6" fill="#fff" fill-opacity="0.97"/><circle cx="147.1" cy="92.5" r="0.5" fill="#fff" fill-opacity="0.88"/><circle cx="100.6" cy="58.0" r="0.5" fill="#fff" fill-opacity="0.72"/><circle cx="93.5" cy="21.4" r="0.8" fill="#fff" fill-opacity="0.92"/><circle cx="85.8" cy="65.2" r="0.45" fill="#fff" fill-opacity="0.67"/></svg><div class="t" style="left:0;top:132px;width:152px;text-align:center;font-weight:bold;color:#fff;text-shadow:0 0 2px #000">FITS</div></div>
<div class="t" style="left:523.0px;top:678.5px;width:180px;text-align:center">sn196a_xray.fits</div>
<div class="t" style="left:525.5px;top:720px;width:180px;text-align:center;font-size:13px;line-height:17px">4/2/21 8:29 AM<br>Mod.: 4/2/21 8:29 AM<br>3,600x3,600 (13.0Mpx)<br>1:1 (1)<br>24.7 MiB</div>
<div class="a" style="left:717px;top:507px;width:152px;height:152px;overflow:hidden;box-shadow:0 0 0 1px rgba(0,0,0,0.3),1px 1px 2px rgba(0,0,0,0.2)"><svg style="left:0;top:0" width="152" height="152"><defs><filter id="bf6" x="-20" y="-20" width="192" height="192" filterUnits="userSpaceOnUse"><feGaussianBlur stdDeviation="2.5"/></filter><filter id="cf6" x="-20" y="-20" width="192" height="192" filterUnits="userSpaceOnUse"><feGaussianBlur stdDeviation="8"/></filter></defs><rect width="152" height="152" fill="#030303"/><ellipse cx="77" cy="77" rx="50" ry="44" fill="#1e1e1e" transform="rotate(-20 77 77)" filter="url(#cf6)"/><filter id="tf6" x="-20" y="-20" width="192" height="192" filterUnits="userSpaceOnUse"><feTurbulence type="turbulence" baseFrequency="0.06" numOctaves="3" seed="21"/><feColorMatrix type="matrix" values="0 0 0 0 1  0 0 0 0 1  0 0 0 0 1  -2.4 0 0 0 0.7"/><feGaussianBlur stdDeviation="0.8"/></filter><mask id="mf6"><ellipse cx="76" cy="75" rx="56" ry="49" fill="#555" transform="rotate(-20 76 75)" filter="url(#bf6)"/></mask><filter id="df6" x="-20" y="-20" width="192" height="192" filterUnits="userSpaceOnUse"><feGaussianBlur stdDeviation="0.8"/></filter><rect width="152" height="152" filter="url(#tf6)" mask="url(#mf6)"/><g filter="url(#bf6)"><ellipse cx="76" cy="75" rx="55" ry="48" fill="none" stroke="#555" stroke-width="6" transform="rotate(-20 76 75)"/><path d="M40 45C60 30 90 28 115 45" stroke="#444" stroke-width="6" fill="none"/></g><g filter="url(#df6)"><circle cx="30.7" cy="106.9" r="1.8" fill="#9a9a9a" opacity="0.86"/><circle cx="28.2" cy="103.6" r="1.7" fill="#9a9a9a" opacity="0.69"/><circle cx="112.4" cy="109.5" r="1.7" fill="#9a9a9a" opacity="0.71"/><circle cx="73.8" cy="25.5" r="1.3" fill="#9a9a9a" opacity="0.55"/><circle cx="129.4" cy="83.7" r="2.0" fill="#9a9a9a" opacity="0.75"/><circle cx="131.2" cy="68.4" r="2.2" fill="#9a9a9a" opacity="0.88"/><circle cx="32.3" cy="48.0" r="1.8" fill="#9a9a9a" opacity="0.48"/><circle cx="130.0" cy="60.2" r="1.7" fill="#9a9a9a" opacity="0.43"/><circle cx="110.9" cy="110.8" r="1.4" fill="#9a9a9a" opacity="0.42"/><circle cx="28.5" cy="104.1" r="1.6" fill="#9a9a9a" opacity="0.82"/><circle cx="21.8" cy="88.5" r="1.8" fill="#9a9a9a" opacity="0.65"/><circle cx="34.2" cy="45.8" r="1.7" fill="#9a9a9a" opacity="0.54"/><circle cx="128.4" cy="55.1" r="2.2" fill="#9a9a9a" opacity="0.82"/><circle cx="46.0" cy="35.6" r="1.5" fill="#9a9a9a" opacity="0.51"/><circle cx="79.5" cy="124.3" r="1.3" fill="#9a9a9a" opacity="0.78"/><circle cx="43.2" cy="117.5" r="2.0" fill="#9a9a9a" opacity="0.59"/><circle cx="122.4" cy="44.5" r="2.0" fill="#9a9a9a" opacity="0.40"/><circle cx="105.4" cy="114.8" r="2.1" fill="#9a9a9a" opacity="0.63"/><circle cx="126.1" cy="50.3" r="1.6" fill="#9a9a9a" opacity="0.44"/><circle cx="27.6" cy="54.7" r="2.0" fill="#9a9a9a" opacity="0.53"/><circle cx="129.7" cy="82.6" r="1.5" fill="#9a9a9a" opacity="0.88"/><circle cx="61.9" cy="28.1" r="1.3" fill="#9a9a9a" opacity="0.52"/><circle cx="128.3" cy="86.8" r="1.3" fill="#9a9a9a" opacity="0.80"/><circle cx="114.2" cy="107.9" r="1.8" fill="#9a9a9a" opacity="0.62"/><circle cx="110.8" cy="110.9" r="1.9" fill="#9a9a9a" opacity="0.47"/><circle cx="30.2" cy="50.8" r="1.3" fill="#9a9a9a" opacity="0.61"/></g></svg><div class="t" style="left:0;top:132px;width:152px;text-align:center;font-weight:bold;color:#fff;text-shadow:0 0 2px #000">FITS</div></div>
<div class="t" style="left:700.5px;top:678.5px;width:180px;text-align:center">kepler_xray_he.fits</div>
<div class="t" style="left:703px;top:720px;width:180px;text-align:center;font-size:13px;line-height:17px">4/2/21 8:28 AM<br>Mod.: 4/2/21 8:28 AM<br>750x750 (0.6Mpx)<br>1:1 (1)<br>559.7 KiB</div>
<div class="a" style="left:361px;top:853px;width:152px;height:152px;overflow:hidden;box-shadow:0 0 0 1px rgba(0,0,0,0.3),1px 1px 2px rgba(0,0,0,0.2)"><svg style="left:0;top:0" width="152" height="152"><rect width="152" height="152" fill="#1a1a1a"/><circle cx="49.2" cy="22.9" r="1.0" fill="#fff" fill-opacity="0.38"/><circle cx="124.8" cy="14.3" r="0.7" fill="#fff" fill-opacity="0.39"/><circle cx="77.1" cy="5.7" r="0.6" fill="#fff" fill-opacity="0.62"/><circle cx="36.6" cy="83.8" r="0.4" fill="#fff" fill-opacity="0.89"/><circle cx="18.8" cy="33.9" r="1.0" fill="#fff" fill-opacity="0.73"/><circle cx="9.4" cy="89.0" r="0.4" fill="#fff" fill-opacity="0.98"/><circle cx="7.1" cy="130.5" r="0.5" fill="#fff" fill-opacity="0.62"/><circle cx="82.2" cy="86.8" r="0.7" fill="#fff" fill-opacity="0.88"/><circle cx="27.5" cy="88.4" r="1.0" fill="#fff" fill-opacity="0.47"/><circle cx="14.8" cy="108.2" r="0.7" fill="#fff" fill-opacity="0.39"/><circle cx="31.3" cy="103.4" r="0.6" fill="#fff" fill-opacity="0.86"/><circle cx="70.8" cy="140.4" r="0.5" fill="#fff" fill-opacity="0.54"/><circle cx="120.7" cy="106.2" r="0.45" fill="#fff" fill-opacity="0.40"/><circle cx="45.6" cy="75.3" r="0.5" fill="#fff" fill-opacity="0.82"/><circle cx="43.8" cy="149.0" r="0.4" fill="#fff" fill-opacity="0.68"/><circle cx="25.1" cy="52.0" r="0.6" fill="#fff" fill-opacity="0.62"/><circle cx="146.2" cy="11.8" r="0.7" fill="#fff" fill-opacity="0.72"/><circle cx="133.1" cy="47.7" r="1.0" fill="#fff" fill-opacity="0.58"/><circle cx="75.5" cy="121.1" r="0.4" fill="#fff" fill-opacity="0.90"/><circle cx="143.6" cy="72.1" r="1.0" fill="#fff" fill-opacity="0.39"/><circle cx="111.1" cy="47.1" r="0.7" fill="#fff" fill-opacity="1.00"/><circle cx="124.9" cy="43.3" r="0.6" fill="#fff" fill-opacity="0.93"/><circle cx="52.7" cy="143.0" r="0.5" fill="#fff" fill-opacity="0.46"/><circle cx="17.8" cy="9.0" r="0.5" fill="#fff" fill-opacity="0.43"/><circle cx="37.6" cy="59.4" r="0.6" fill="#fff" fill-opacity="0.40"/><circle cx="68.3" cy="83.5" r="0.45" fill="#fff" fill-opacity="0.88"/><circle cx="131.3" cy="42.3" r="0.6" fill="#fff" fill-opacity="0.99"/><circle cx="103.8" cy="57.8" r="0.45" fill="#fff" fill-opacity="0.45"/><circle cx="26.8" cy="35.3" r="0.45" fill="#fff" fill-opacity="0.36"/><circle cx="126.3" cy="27.7" r="0.5" fill="#fff" fill-opacity="0.35"/><circle cx="63.7" cy="56.1" r="0.7" fill="#fff" fill-opacity="0.56"/><circle cx="19.1" cy="130.6" r="0.7" fill="#fff" fill-opacity="0.78"/><circle cx="112.4" cy="69.4" r="1.0" fill="#fff" fill-opacity="0.87"/><circle cx="59.6" cy="60.6" r="0.4" fill="#fff" fill-opacity="0.66"/><circle cx="60.9" cy="29.0" r="0.45" fill="#fff" fill-opacity="0.64"/><circle cx="16.7" cy="91.3" r="0.4" fill="#fff" fill-opacity="0.35"/><circle cx="23.0" cy="15.4" r="0.5" fill="#fff" fill-opacity="0.75"/><circle cx="10.7" cy="31.6" r="0.6" fill="#fff" fill-opacity="0.45"/><circle cx="38.3" cy="52.8" r="0.5" fill="#fff" fill-opacity="0.66"/><circle cx="17.5" cy="74.2" r="0.6" fill="#fff" fill-opacity="0.66"/><circle cx="47.4" cy="21.9" r="1.0" fill="#fff" fill-opacity="0.57"/><circle cx="40.2" cy="126.0" r="0.45" fill="#fff" fill-opacity="0.69"/><circle cx="31.2" cy="144.7" r="0.5" fill="#fff" fill-opacity="0.45"/><circle cx="82.6" cy="4.1" r="0.7" fill="#fff" fill-opacity="0.54"/><circle cx="97.7" cy="13.8" r="0.5" fill="#fff" fill-opacity="0.69"/><circle cx="138.1" cy="54.1" r="0.45" fill="#fff" fill-opacity="0.70"/><circle cx="118.4" cy="50.1" r="0.45" fill="#fff" fill-opacity="0.75"/><circle cx="119.8" cy="115.3" r="0.45" fill="#fff" fill-opacity="0.87"/><circle cx="124.4" cy="112.5" r="0.45" fill="#fff" fill-opacity="0.48"/><circle cx="74.9" cy="111.1" r="0.4" fill="#fff" fill-opacity="0.86"/><circle cx="71.8" cy="29.4" r="0.7" fill="#fff" fill-opacity="0.97"/><circle cx="68.0" cy="142.4" r="0.5" fill="#fff" fill-opacity="0.97"/><circle cx="55.4" cy="33.5" r="0.45" fill="#fff" fill-opacity="0.66"/><circle cx="51.3" cy="73.4" r="0.7" fill="#fff" fill-opacity="0.90"/><circle cx="72.9" cy="99.3" r="1.0" fill="#fff" fill-opacity="0.41"/><circle cx="100.4" cy="138.3" r="1.0" fill="#fff" fill-opacity="0.84"/><circle cx="72.7" cy="27.1" r="1.0" fill="#fff" fill-opacity="0.57"/><circle cx="121.7" cy="147.7" r="0.6" fill="#fff" fill-opacity="0.65"/><circle cx="113.0" cy="12.9" r="0.45" fill="#fff" fill-opacity="0.46"/><circle cx="19.3" cy="23.0" r="0.6" fill="#fff" fill-opacity="0.87"/></svg><div class="t" style="left:0;top:132px;width:152px;text-align:center;font-weight:bold;color:#fff;text-shadow:0 0 2px #000">FITS</div></div>
<div class="a" style="left:346px;top:864px;width:580px;height:41px;background:#eff0f1"></div>
<div class="a" style="left:347px;top:863px;width:578px;height:1px;background:#d0d2d4"></div>
<div class="a" style="left:925px;top:84px;width:36px;height:786px;background:#eff0f1"></div>
<div class="t" style="left:0px;top:879px;">b1509_ir_G.fits (1 of 19)</div>
<div class="t" style="left:257px;top:879px;">No ac…ilter</div>
<div class="t" style="left:455px;top:879px;">No active process</div>
<div class="a" style="left:857px;top:869px;width:84px;height:35px;background:#eff0f1;border:1px solid #d3d5d7;border-radius:3px"></div>
<div class="t" style="left:864px;top:879px;color:#a5a7a9">10%</div>
<svg style="left:923px;top:883px;" width="12" height="7" viewBox="0 0 12 7"><path d="M1.0 1.0L6 6.0L11.0 1.0" fill="none" stroke="#a5a7a9" stroke-width="1"/></svg>
<div class="t" style="left:8px;top:88px;width:18px;height:55px;writing-mode:vertical-rl;transform:rotate(180deg);line-height:18px">Albums</div>
<div class="t" style="left:8px;top:174px;width:18px;height:39px;writing-mode:vertical-rl;transform:rotate(180deg);line-height:18px">Tags</div>
<div class="t" style="left:8px;top:245px;width:18px;height:51px;writing-mode:vertical-rl;transform:rotate(180deg);line-height:18px">Labels</div>
<div class="t" style="left:8px;top:325px;width:18px;height:45px;writing-mode:vertical-rl;transform:rotate(180deg);line-height:18px">Dates</div>
<div class="t" style="left:8px;top:395px;width:18px;height:70px;writing-mode:vertical-rl;transform:rotate(180deg);line-height:18px">Timeline</div>
<div class="t" style="left:8px;top:497px;width:18px;height:54px;writing-mode:vertical-rl;transform:rotate(180deg);line-height:18px">Search</div>
<div class="t" style="left:8px;top:581px;width:18px;height:69px;writing-mode:vertical-rl;transform:rotate(180deg);line-height:18px">Similarity</div>
<div class="t" style="left:8px;top:682px;width:18px;height:34px;writing-mode:vertical-rl;transform:rotate(180deg);line-height:18px">Map</div>
<div class="t" style="left:8px;top:747px;width:18px;height:53px;writing-mode:vertical-rl;transform:rotate(180deg);line-height:18px">People</div>
<svg style="left:9px;top:151px;" width="12" height="12" viewBox="0 0 12 12"><rect x="0.5" y="0.5" width="11" height="11" fill="none" stroke="#232629"/><circle cx="3.2" cy="3.2" r="1.3" fill="#232629"/><path d="M1.8 10L3.8 7.2L5 8L3.3 10.3Z" fill="#232629"/><path d="M5.6 10.2L8 7L10.5 10.2Z" fill="#232629"/></svg>
<svg style="left:9px;top:221px;" width="12" height="12" viewBox="0 0 12 12"><path d="M0.6 5V0.6H5L11.4 7L7 11.4Z" fill="#232629" stroke="#232629" stroke-width="1.2" stroke-linejoin="round"/><circle cx="3.3" cy="3.3" r="1.1" fill="#eff0f1"/></svg>
<svg style="left:9px;top:303px;" width="12" height="12" viewBox="0 0 12 12"><path d="M6 0.4L7.6 4.1L11.6 4.4L8.5 7L9.5 11L6 8.8L2.5 11L3.5 7L0.4 4.4L4.4 4.1Z" fill="#232629" stroke="#232629" stroke-width="0.6" stroke-linejoin="round"/></svg>
<svg style="left:9px;top:379px;" width="12" height="12" viewBox="0 0 12 12"><rect x="1.6" y="0.6" width="9.8" height="10.8" fill="none" stroke="#232629" stroke-width="1.2"/><path d="M2.3 0.6V11.4" stroke="#232629" stroke-width="1.6"/><path d="M0 2.6H2M0 9.4H2" stroke="#232629" stroke-width="1"/><path d="M4.5 2.6H9M4.5 6.2H9M7.5 9.4H9" stroke="#232629" stroke-width="1.1"/></svg>
<svg style="left:9px;top:475px;" width="13" height="12" viewBox="0 0 13 13"><circle cx="6.5" cy="6.5" r="5.3" fill="none" stroke="#232629" stroke-width="1.2"/><path d="M5 4L9 6.5L5 9Z" fill="#232629"/><path d="M2 1.5L3.5 0.5M11 1.5L9.5 0.5" stroke="#232629"/></svg>
<svg style="left:9px;top:558px;" width="12" height="13" viewBox="0 0 12 13"><circle cx="4.5" cy="5.5" r="3.9" fill="none" stroke="#232629" stroke-width="1.2"/><path d="M7.3 8.3L11.3 12.3" stroke="#232629" stroke-width="1.3"/></svg>
<svg style="left:9px;top:657px;" width="12" height="13" viewBox="0 0 12 13"><path d="M0.8 10.2L8.6 2.4C9 2 9.5 2 9.9 2.4L11 3.5C11.4 3.9 11.4 4.4 11 4.8L3.2 12.6Z" fill="#232629"/><path d="M8.2 4.5L9.2 3.5L10 4.3L9 5.3Z" fill="#eff0f1"/><path d="M2.5 1.6L3.1 2.9L4.4 3.5L3.1 4.1L2.5 5.4L1.9 4.1L0.6 3.5L1.9 2.9Z" fill="#232629"/></svg>
<svg style="left:9px;top:724px;" width="12" height="12" viewBox="0 0 16 16"><circle cx="8" cy="7.9" r="7.3" fill="none" stroke="#232629" stroke-width="1.3"/><path d="M1.2 4.5L3.4 1.9L6.5 1.4L6.9 2.4L4.5 3.7L1.9 4.9Z" fill="#232629"/><path d="M11.2 1.2L11.6 4.3L9.5 5.9L9.8 7.2L12.9 8.3L13.1 11.8L14.9 10.3L15.6 7.2L14.9 3.4L13.4 1.9Z" fill="#232629"/><path d="M3.2 8.5L5.2 7.8L7.6 10.3L6.3 12L5.4 14.2L4.3 13.4L4.1 10.7L3 9.9Z" fill="#232629"/></svg>
<svg style="left:9px;top:808px;" width="12" height="12" viewBox="0 0 12 12"><path d="M0.6 3V0.6H3M9 0.6H11.4V3M11.4 9V11.4H9M3 11.4H0.6V9M5 0.6H7M5 11.4H7M0.6 5V7M11.4 5V7" fill="none" stroke="#232629" stroke-width="1.2"/><circle cx="6" cy="3.6" r="1.2" fill="#232629"/><path d="M3.6 8.8C3.6 6.6 8.4 6.6 8.4 8.8Z" fill="none" stroke="#232629" stroke-width="1.1"/></svg>
<div class="t" style="left:934px;top:111px;width:18px;height:74px;writing-mode:vertical-rl;line-height:18px">Properties</div>
<div class="t" style="left:934px;top:218px;width:18px;height:68px;writing-mode:vertical-rl;line-height:18px">Metadata</div>
<div class="t" style="left:934px;top:319px;width:18px;height:48px;writing-mode:vertical-rl;line-height:18px">Colors</div>
<div class="t" style="left:934px;top:400px;width:18px;height:32px;writing-mode:vertical-rl;line-height:18px">Map</div>
<div class="t" style="left:934px;top:466px;width:18px;height:64px;writing-mode:vertical-rl;line-height:18px">Captions</div>
<div class="t" style="left:934px;top:563px;width:18px;height:64px;writing-mode:vertical-rl;line-height:18px">Versions</div>
<div class="t" style="left:934px;top:660px;width:18px;height:46px;writing-mode:vertical-rl;line-height:18px">Filters</div>
<div class="t" style="left:934px;top:738px;width:18px;height:40px;writing-mode:vertical-rl;line-height:18px">Tools</div>
<div class="a" style="left:925px;top:84px;width:1px;height:779px;background:#dcdee0"></div>
<svg style="left:938px;top:91px;" width="12" height="12" viewBox="0 0 12 12"><path d="M0 2.5H12M0 9.5H2M5 9.5H12" stroke="#232629" stroke-width="1.1"/><circle cx="8.5" cy="2.5" r="1.8" fill="#232629"/><circle cx="3.5" cy="9.5" r="1.5" fill="#eff0f1" stroke="#232629"/></svg>
<svg style="left:938px;top:198px;" width="12" height="12" viewBox="0 0 12 12"><path d="M4 2.5L0.8 6L4 9.5M8 2.5L11.2 6L8 9.5M7 1L5 11" fill="none" stroke="#232629" stroke-width="1.1"/></svg>
<svg style="left:937px;top:298px;" width="14" height="14" viewBox="0 0 14 14"><circle cx="6.9" cy="2.6" r="1.6" fill="none" stroke="#232629" stroke-width="1.1"/><path d="M6.9 4.2L10.6 8L5.3 12.8L1.2 8.6Z" fill="none" stroke="#232629" stroke-width="1.2" stroke-linejoin="round"/><path d="M2 8.2H9.9L5.3 12.6Z" fill="#232629"/><path d="M11.6 8.6L12.9 11A1.35 1.35 0 1 1 10.3 11Z" fill="#232629"/></svg>
<svg style="left:938px;top:380px;" width="12" height="12" viewBox="0 0 16 16"><circle cx="8" cy="7.9" r="7.3" fill="none" stroke="#232629" stroke-width="1.3"/><path d="M1.2 4.5L3.4 1.9L6.5 1.4L6.9 2.4L4.5 3.7L1.9 4.9Z" fill="#232629"/><path d="M11.2 1.2L11.6 4.3L9.5 5.9L9.8 7.2L12.9 8.3L13.1 11.8L14.9 10.3L15.6 7.2L14.9 3.4L13.4 1.9Z" fill="#232629"/><path d="M3.2 8.5L5.2 7.8L7.6 10.3L6.3 12L5.4 14.2L4.3 13.4L4.1 10.7L3 9.9Z" fill="#232629"/></svg>
<svg style="left:938px;top:445px;" width="12" height="13" viewBox="0 0 12 13"><path d="M1.2 4.6V12.4H10.8V4.2L7.6 1H4.6" fill="none" stroke="#232629" stroke-width="1.2"/><path d="M7 0.6H8L11.2 3.8V5H7Z" fill="#232629"/><path d="M3 4.3H5.2M3 7.4H8.8M3 10.4H8.8" stroke="#232629" stroke-width="1.1"/><path d="M0 1H3.8L1.9 3.6Z" fill="#5aaad0"/></svg>
<svg style="left:937px;top:543px;" width="13" height="13" viewBox="0 0 13 13"><rect x="0.5" y="0.5" width="7" height="7" fill="none" stroke="#232629"/><rect x="4.5" y="4.5" width="8" height="8" fill="#eff0f1" stroke="#232629"/><path d="M6.5 7H10.5M6.5 9H10.5" stroke="#232629"/></svg>
<svg style="left:938px;top:641px;" width="12" height="12" viewBox="0 0 12 12"><path d="M1.2 0.8H10.8C11.4 0.8 11.6 1.3 11.3 1.8L7.2 8V11.5L4.6 10V8L0.7 1.8C0.4 1.3 0.6 0.8 1.2 0.8Z" fill="none" stroke="#232629" stroke-width="1.2" stroke-linejoin="round"/></svg>
<svg style="left:937px;top:718px;" width="13" height="13" viewBox="0 0 13 13"><path d="M1 12L1.5 9L9 1.5L11.5 4L4 11.5Z" fill="none" stroke="#232629" stroke-width="1.1"/><path d="M7.5 3L10 5.5L11.5 4L9 1.5Z" fill="#232629"/></svg>
<svg style="left:361px;top:879px;" width="12" height="13" viewBox="0 0 16 16"><path d="M1.5 3H14.5" stroke="#b4b6b8"/><path d="M5.5 3V0.5H10.5V3" fill="none" stroke="#b4b6b8"/><path d="M2.5 3V15.5H13.5V3" fill="none" stroke="#b4b6b8"/><path d="M5.5 6V12.5M10.5 6V12.5" stroke="#b4b6b8"/></svg>
<svg style="left:393px;top:879px;" width="14" height="13" viewBox="0 0 14 13"><path d="M0.7 0.7H13.3L7 12.3Z" fill="none" stroke="#232629" stroke-width="1.2"/></svg>
<svg style="left:631px;top:880px;" width="13" height="13" viewBox="0 0 13 13"><path d="M0.6 3V0.6H3M10 0.6H12.4V3M12.4 10V12.4H10M3 12.4H0.6V10" fill="none" stroke="#232629" stroke-width="1.2"/><rect x="4" y="4" width="5" height="5" fill="none" stroke="#232629" stroke-width="1.2"/><path d="M6.5 1.6L5.3 2.8H7.7ZM6.5 11.4L5.3 10.2H7.7ZM1.6 6.5L2.8 5.3V7.7ZM11.4 6.5L10.2 5.3V7.7Z" fill="#232629"/></svg>
<svg style="left:658px;top:880px;" width="13" height="13" viewBox="0 0 13 13"><path d="M0.6 3V0.6H3M10 0.6H12.4V3M12.4 10V12.4H10M3 12.4H0.6V10" fill="none" stroke="#6b6d70" stroke-width="1.2"/><rect x="3" y="3" width="7" height="7" fill="none" stroke="#6b6d70" stroke-width="1.2"/></svg>
<svg style="left:686px;top:880px;" width="13" height="13" viewBox="0 0 13 13"><path d="M0.6 7V0.6H12.4V12.4H6" fill="none" stroke="#232629" stroke-width="1.2"/><rect x="0.6" y="9" width="3.4" height="3.4" fill="none" stroke="#232629" stroke-width="1.2"/><path d="M10.2 2.8L6 7M5.6 3.6V7.4H9.4" fill="none" stroke="#232629" stroke-width="1.2"/></svg>
<div class="a" style="left:709px;top:882px;width:116px;height:7px;background:#dcdee0;border:1px solid #c5c7c9;border-radius:4px"></div>
<div class="a" style="left:709px;top:882px;width:22px;height:7px;background:#93cef2;border:1px solid #4a9fd3;border-radius:4px"></div>
<div class="a" style="left:720px;top:876px;width:19px;height:19px;border-radius:50%;background:#f3f4f5;border:1px solid #9fa1a4"></div>
<svg style="left:835px;top:880px;" width="13" height="13" viewBox="0 0 13 13"><path d="M0.6 3V0.6H3M10 0.6H12.4V3M12.4 10V12.4H10M3 12.4H0.6V10M5 0.6H7M0.6 5V7" fill="none" stroke="#232629" stroke-width="1.2"/><path d="M4 9L9 4M5.8 3.6H9.4V7.2" fill="none" stroke="#232629" stroke-width="1.2"/></svg>
<div class="a" style="left:232px;top:312px;width:350px;height:540px;background:#f2f2f2;border:1px solid #cdcdcd;border-radius:4px;box-shadow:0 2px 6px rgba(0,0,0,0.22)"></div>
<div class="a" style="left:233px;top:313px;width:348px;height:33px;background:#ebebeb;border-radius:3px 3px 0 0"></div>
<div class="t" style="left:232px;top:321px;width:350px;text-align:center;font-size:17px;line-height:19px">Albums</div>
<div class="a" style="left:233px;top:346px;width:348px;height:1px;background:#c9c9c9"></div>
<div class="a" style="left:233px;top:408px;width:348px;height:1px;background:#c9c9c9"></div>
<div class="a" style="left:233px;top:473px;width:348px;height:1px;background:#c9c9c9"></div>
<div class="a" style="left:233px;top:596px;width:348px;height:1px;background:#c9c9c9"></div>
<div class="a" style="left:233px;top:748px;width:348px;height:1px;background:#c9c9c9"></div>
<div class="a" style="left:233px;top:784px;width:348px;height:1px;background:#c9c9c9"></div>
<div class="a" style="left:233px;top:820px;width:348px;height:1px;background:#c9c9c9"></div>
<svg style="left:241px;top:355px;" width="12" height="12" viewBox="0 0 12 12"><path d="M0.6 11.4V0.6H4.8L6.4 2.3H11.4V6.6M0.6 11.4H6.6" fill="none" stroke="#232629" stroke-width="1.2"/><path d="M4.4 1.7H12V4.4H2.2Z" fill="#232629"/><path d="M0.6 4.4H2.6" stroke="#232629" stroke-width="1"/><path d="M9.4 7.2V12M7 9.6H11.8" stroke="#232629" stroke-width="1.2"/></svg>
<div class="t" style="left:261px;top:354px;">New...</div>
<div class="t" style="left:400px;top:354px;width:153px;text-align:right">Ctrl+N</div>
<svg style="left:241px;top:384px;" width="12" height="12" viewBox="0 0 12 12"><path d="M0.6 0.6H4.8L6.4 2.3H11.4V11.4H0.6Z" fill="none" stroke="#232629" stroke-width="1.2"/><path d="M0 0H5.1L6.7 1.7H12V3.4H5.4L3.2 5.8H0Z" fill="#232629"/></svg>
<div class="t" style="left:261px;top:383px;">Open in File Manager</div>
<svg style="left:241px;top:420px;" width="12" height="12" viewBox="0 0 12 12"><path d="M0.6 11.4L1.1 8.1L8.5 0.7L11.3 3.5L3.9 10.9Z" fill="none" stroke="#232629" stroke-width="1.3" stroke-linejoin="round"/><path d="M8.5 0.7L11.3 3.5L9.4 5.4L6.6 2.6Z" fill="#232629"/><path d="M0.6 11.4L1.0 9.0C1.8 9.2 2.6 10 2.9 11Z" fill="#232629"/></svg>
<div class="t" style="left:261px;top:419px;">Rename...</div>
<div class="t" style="left:400px;top:419px;width:153px;text-align:right">Shift+F2</div>
<svg style="left:241px;top:449px;" width="12" height="12" viewBox="0 0 12 12"><path d="M4.63 0.88A5.3 5.3 0 0 1 10.06 9.41L8.4 7.9M7.37 11.12A5.3 5.3 0 0 1 1.94 2.59L3.6 4.1" fill="none" stroke="#232629" stroke-width="1.2" stroke-linecap="round" stroke-linejoin="round"/></svg>
<div class="t" style="left:261px;top:448px;">Reset Album Icon</div>
<svg style="left:240px;top:485px;" width="13" height="13" viewBox="0 0 13 13"><path d="M1 4L6.5 9.5L12 4" fill="none" stroke="#232629" stroke-width="1.1"/></svg>
<div class="t" style="left:261px;top:484px;">Expand Selected Nodes</div>
<svg style="left:240px;top:514px;" width="13" height="13" viewBox="0 0 13 13"><path d="M1 9L6.5 3.5L12 9" fill="none" stroke="#232629" stroke-width="1.1"/></svg>
<div class="t" style="left:261px;top:513px;">Collapse Selected Recursively</div>
<svg style="left:240px;top:543px;" width="13" height="13" viewBox="0 0 13 13"><path d="M1 2H12" stroke="#232629" stroke-width="1.1"/><path d="M1 5L6.5 10.5L12 5" fill="none" stroke="#232629" stroke-width="1.1"/></svg>
<div class="t" style="left:261px;top:542px;">Expand all Albums</div>
<svg style="left:240px;top:572px;" width="13" height="13" viewBox="0 0 13 13"><path d="M1 2H12" stroke="#232629" stroke-width="1.1"/><path d="M1 10.5L6.5 5L12 10.5" fill="none" stroke="#232629" stroke-width="1.1"/></svg>
<div class="t" style="left:261px;top:571px;">Collapse all Albums</div>
<svg style="left:241px;top:608px;" width="12" height="12" viewBox="0 0 12 12"><path d="M0.5 9.2L8.1 1.6C8.6 1.1 9.3 1.1 9.8 1.6L10.9 2.7C11.4 3.2 11.4 3.9 10.9 4.4L3.3 12C2.8 12.5 2.1 12.5 1.6 12L0.5 10.9C0 10.4 0 9.7 0.5 9.2Z" fill="#232629"/><path d="M7.6 4L8.9 2.7L9.8 3.6L8.5 4.9Z" fill="#f2f2f2"/><path d="M1.8 0.2L2.3 1.3L3.4 1.8L2.3 2.3L1.8 3.4L1.3 2.3L0.2 1.8L1.3 1.3Z" fill="#232629"/></svg>
<div class="t" style="left:261px;top:607px;">Find Duplicates...</div>
<svg style="left:241px;top:637px;" width="12" height="12" viewBox="0 0 12 12"><circle cx="5" cy="2.8" r="2.3" fill="none" stroke="#232629" stroke-width="1.1"/><path d="M5.5 6.8C3.5 6.6 1.6 8.4 0.6 10.9H5.2" fill="none" stroke="#232629" stroke-width="1.1"/><path d="M9.3 6.8V11.8M6.8 9.3H11.8" stroke="#232629" stroke-width="1.2"/></svg>
<div class="t" style="left:261px;top:636px;">Scan for Faces</div>
<svg style="left:241px;top:666px;" width="12" height="12" viewBox="0 0 12 12"><path d="M4.63 0.88A5.3 5.3 0 0 1 10.06 9.41L8.4 7.9M7.37 11.12A5.3 5.3 0 0 1 1.94 2.59L3.6 4.1" fill="none" stroke="#232629" stroke-width="1.2" stroke-linecap="round" stroke-linejoin="round"/></svg>
<div class="t" style="left:261px;top:665px;">Refresh</div>
<div class="t" style="left:261px;top:694px;">Import</div>
<svg style="left:564px;top:696px;" width="7" height="11" viewBox="0 0 7 11"><path d="M1 1L6 5.5L1 10" fill="none" stroke="#232629" stroke-width="1.1"/></svg>
<div class="t" style="left:261px;top:723px;">Export</div>
<svg style="left:564px;top:725px;" width="7" height="11" viewBox="0 0 7 11"><path d="M1 1L6 5.5L1 10" fill="none" stroke="#232629" stroke-width="1.1"/></svg>
<svg style="left:241px;top:759px;" width="12" height="13" viewBox="0 0 12 13"><path d="M0.6 10.4V1.2L2.2 0.6H6.6L8.2 1.6" fill="#9a9a9a" stroke="#555" stroke-width="1"/><path d="M0.6 10.4L3.4 12.2V3.2L0.6 1.2Z" fill="#8a8a8a"/><rect x="3.6" y="2.6" width="7.8" height="9.8" fill="#f2f2f2" stroke="#232629" stroke-width="1.2"/></svg>
<div class="t" style="left:261px;top:759px;">Repair hidden Items</div>
<svg style="left:241px;top:796px;" width="12" height="12" viewBox="0 0 12 12"><path d="M0.2 2.6H11.8" stroke="#c2456a" stroke-width="1.1"/><path d="M3.8 2.6V0.6H8.2V2.6" fill="none" stroke="#c2456a" stroke-width="1.1"/><path d="M2.2 2.6V11.4H9.8V2.6" fill="none" stroke="#c2456a" stroke-width="1.2"/></svg>
<div class="t" style="left:261px;top:795px;">Delete Album</div>
<svg style="left:241px;top:832px;" width="12" height="12" viewBox="0 0 12 12"><path d="M0 2.6H12M4.6 9H12" stroke="#232629" stroke-width="1.1"/><path d="M0 9H1.4" stroke="#232629" stroke-width="1.1"/><circle cx="7.6" cy="2.6" r="1.7" fill="#232629"/><circle cx="3" cy="9" r="1.5" fill="#f2f2f2" stroke="#232629" stroke-width="1.1"/></svg>
<div class="t" style="left:261px;top:831px;">Properties</div>
<div class="t" style="left:400px;top:831px;width:153px;text-align:right">Alt+Return</div>
</div></body></html>
